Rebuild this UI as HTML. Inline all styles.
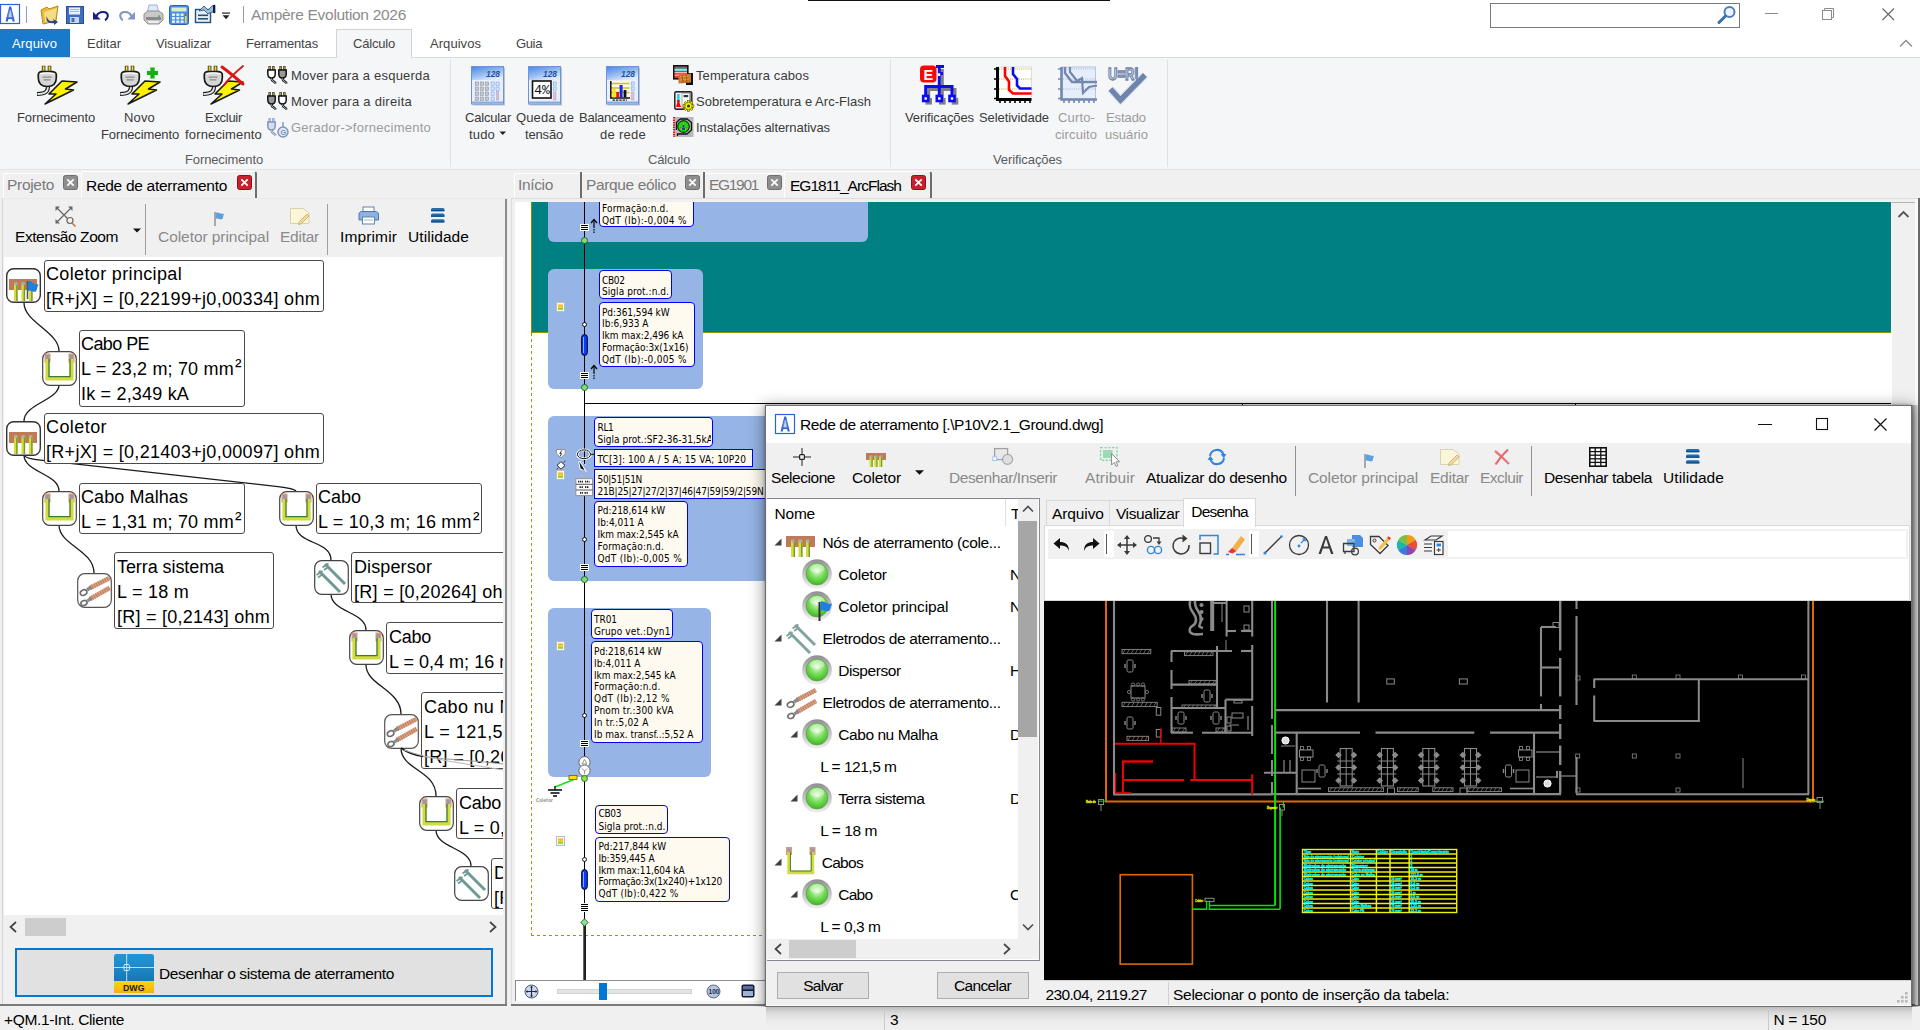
<!DOCTYPE html>
<html lang="pt"><head><meta charset="utf-8"><title>Ampère Evolution 2026</title>
<style>
html,body{margin:0;padding:0;}
body{width:1920px;height:1030px;overflow:hidden;position:relative;background:#f0f0f0;font-family:"Liberation Sans",sans-serif;color:#000;}
div,span.t,svg{position:absolute;box-sizing:border-box;}
span.t{white-space:pre;line-height:1;}
svg{overflow:visible;}
</style></head><body>
<div style="left:0px;top:0px;width:1920px;height:29px;background:#fff;"></div>
<div style="left:808px;top:0px;width:302px;height:1px;background:#111;"></div>
<svg style="left:0px;top:4px;" width="20" height="20" viewBox="0 0 20 20"><rect x="0.5" y="0.5" width="19" height="19" fill="#fff" stroke="#2a62d9" stroke-width="1.2"/><path d="M9.3 2.5 H11.1 L14.8 17.5 H12.6 L10.2 5.5 L7.8 17.5 H5.6Z" fill="#2f63d6"/><path d="M9 6 L7.2 15 H13.2 L11.4 6" fill="#8fb0ee" opacity="0.55"/><path d="M6.6 14.2 H13.8" stroke="#2f63d6" stroke-width="1.7"/></svg>
<div style="left:26px;top:6px;width:1px;height:17px;background:#9a9a9a;"></div>
<svg style="left:38px;top:4px;" width="23" height="21" viewBox="0 0 23 21"><path d="M3 6 L9 3 L11 5 L20 2 L18 17 L5 20 Z" fill="#e9b93b" stroke="#b98a1c" stroke-width="1"/><path d="M6 8 L19 4 L17 16 L7 18Z" fill="#f7dc84"/><path d="M9 12 c0 4 3 6 7 5 l-1 -2 5 3 -4 3 0 -2 c-5 1 -9 -2 -7 -7z" fill="#1c3f94"/></svg>
<svg style="left:66px;top:6px;" width="19" height="18" viewBox="0 0 19 18"><rect x="0.5" y="0.5" width="17" height="17" fill="#3c6fc0" stroke="#2a4f94"/><rect x="3" y="1.5" width="11" height="7" fill="#e8f0fb"/><rect x="4" y="3" width="9" height="1" fill="#9db7df"/><rect x="4" y="5" width="9" height="1" fill="#9db7df"/><rect x="4" y="11" width="9" height="6" fill="#c9d6ea"/><rect x="5.5" y="12" width="3" height="4" fill="#3c6fc0"/></svg>
<svg style="left:92px;top:10px;" width="18" height="12" viewBox="0 0 18 12"><path d="M4.5 6 C7 0.5 16.5 0.8 15.8 6.2 C15.6 8 14.6 9.4 13 10.2" fill="none" stroke="#17207e" stroke-width="2.1"/><path d="M1 1.8 V9.4 H8.6Z" fill="#17207e"/></svg>
<svg style="left:118px;top:10px;" width="18" height="12" viewBox="0 0 18 12"><path d="M13.5 6 C11 0.5 1.5 0.8 2.2 6.2 C2.4 8 3.4 9.4 5 10.2" fill="none" stroke="#7f97c6" stroke-width="2.1"/><path d="M17 1.8 V9.4 H9.4Z" fill="#7f97c6"/></svg>
<svg style="left:143px;top:4px;" width="21" height="21" viewBox="0 0 21 21"><path d="M6 1 H14 L16 9 H4Z" fill="#dfe9f7" stroke="#9fb4d3"/><path d="M1 10 L5 7 H16 L20 10 V16 L16 20 H5 L1 16Z" fill="#c9c9c9" stroke="#8f8f8f"/><path d="M3 13 H18 V16 H3Z" fill="#8a8a8a"/><path d="M5 17 H16 L15 19 H6Z" fill="#eee"/><rect x="15" y="11.5" width="2" height="1.2" fill="#3ba43b"/></svg>
<svg style="left:169px;top:5px;" width="21" height="20" viewBox="0 0 21 20"><rect x="0.5" y="0.5" width="19" height="19" rx="2" fill="#4a8ee0" stroke="#2a62b8"/><rect x="2.5" y="2.5" width="15" height="4" fill="#d9f0c0"/><g fill="#e8f1fc"><rect x="3" y="8.5" width="3" height="2.4"/><rect x="7.3" y="8.5" width="3" height="2.4"/><rect x="11.6" y="8.5" width="3" height="2.4"/><rect x="3" y="12" width="3" height="2.4"/><rect x="7.3" y="12" width="3" height="2.4"/><rect x="11.6" y="12" width="3" height="2.4"/><rect x="3" y="15.5" width="3" height="2.4"/><rect x="7.3" y="15.5" width="3" height="2.4"/><rect x="11.6" y="15.5" width="3" height="2.4"/></g><rect x="16" y="9" width="1.6" height="9" fill="#f3d94a"/><rect x="16" y="9" width="1.6" height="2" fill="#e03a3a"/></svg>
<svg style="left:195px;top:5px;" width="21" height="19" viewBox="0 0 21 19"><rect x="0.5" y="4.5" width="15" height="13" fill="#e8eef6" stroke="#23507e" stroke-width="1.4"/><rect x="3" y="9.5" width="10" height="1.6" fill="#23507e"/><rect x="3" y="13" width="10" height="1.6" fill="#23507e"/><path d="M4 6 L9 1 L13 5 L17 1 L20 0 V8 L17 7 L13 9 L9 5Z" fill="#9db9d9" stroke="#23507e" stroke-width="0.8"/><rect x="18" y="0" width="2" height="8" fill="#0b1c4a"/></svg>
<svg style="left:222px;top:12px;" width="9" height="8" viewBox="0 0 9 8"><rect x="0" y="0.5" width="8" height="1.2" fill="#222"/><path d="M0.5 3.2 H7.5 L4 7.2Z" fill="#222"/></svg>
<div style="left:243px;top:6px;width:1px;height:17px;background:#9a9a9a;"></div>
<span class="t" style="left:251px;top:6.88px;font-size:15.5px;letter-spacing:-0.291px;color:#8b8b8b;">Ampère Evolution 2026</span>
<div style="left:1490px;top:3px;width:250px;height:25px;background:#fff;border:1px solid #7a7a7a;"></div>
<svg style="left:1716px;top:5px;" width="22" height="20" viewBox="0 0 22 20"><circle cx="13.5" cy="7" r="5" fill="#e9f3fc" stroke="#4a7fb5" stroke-width="2"/><path d="M9.5 11 L3 17.5" stroke="#3b6ea3" stroke-width="3" stroke-linecap="round"/></svg>
<div style="left:1765px;top:13px;width:13px;height:1px;background:#8a8a8a;"></div>
<svg style="left:1822px;top:8px;" width="13" height="13" viewBox="0 0 13 13"><rect x="0.5" y="2.5" width="9" height="9" fill="none" stroke="#8a8a8a"/><path d="M2.5 2.5 V0.5 H11.5 V9.5 H9.5" fill="none" stroke="#8a8a8a"/></svg>
<svg style="left:1882px;top:8px;" width="13" height="13" viewBox="0 0 13 13"><path d="M0.5 0.5 L12 12 M12 0.5 L0.5 12" stroke="#666" stroke-width="1.1" fill="none"/></svg>
<div style="left:0px;top:29px;width:1920px;height:29px;background:#fff;"></div>
<div style="left:0px;top:57px;width:1920px;height:1px;background:#dadbdc;"></div>
<div style="left:0px;top:29px;width:70px;height:28px;background:#1979ca;"></div>
<span class="t" style="left:12px;top:37.00px;font-size:13px;letter-spacing:0.132px;color:#fff;">Arquivo</span>
<span class="t" style="left:87px;top:37.00px;font-size:13px;letter-spacing:0.007px;color:#444;">Editar</span>
<span class="t" style="left:156px;top:37.00px;font-size:13px;letter-spacing:-0.112px;color:#444;">Visualizar</span>
<span class="t" style="left:246px;top:37.00px;font-size:13px;letter-spacing:-0.153px;color:#444;">Ferramentas</span>
<div style="left:336px;top:29px;width:76px;height:30px;background:#f5f6f8;border:1px solid #d2d3d4;border-bottom:none;"></div>
<span class="t" style="left:353px;top:37.00px;font-size:13px;letter-spacing:-0.193px;color:#444;">Cálculo</span>
<span class="t" style="left:430px;top:37.00px;font-size:13px;letter-spacing:0.053px;color:#444;">Arquivos</span>
<span class="t" style="left:516px;top:37.00px;font-size:13px;letter-spacing:-0.365px;color:#444;">Guia</span>
<svg style="left:1899px;top:39px;" width="14" height="9" viewBox="0 0 14 9"><path d="M1 7.5 L7 1.5 L13 7.5" fill="none" stroke="#8a8a8a" stroke-width="1.3"/></svg>
<div style="left:0px;top:58px;width:1920px;height:112px;background:#f5f6f8;"></div>
<div style="left:0px;top:169px;width:1920px;height:1px;background:#e3e4e6;"></div>
<div style="left:450px;top:60px;width:1px;height:107px;background:#e0e1e3;"></div>
<div style="left:890px;top:60px;width:1px;height:107px;background:#e0e1e3;"></div>
<div style="left:1167px;top:60px;width:1px;height:107px;background:#e0e1e3;"></div>
<svg style="left:36px;top:64px;" width="44" height="42" viewBox="0 0 44 42"><path d="M7.6 1.7 V9.5 M13.5 1.7 V9.5" stroke="#3a3300" stroke-width="3.6"/><path d="M7.6 2.2 V9.5 M13.5 2.2 V9.5" stroke="#e8d43a" stroke-width="1.9"/>
<path d="M12 21 C12.5 27 10 30 1 30" fill="none" stroke="#222" stroke-width="4.2"/><path d="M12 21 C12.5 27 10 30 1.5 30" fill="none" stroke="#e4e4e4" stroke-width="1.8"/>
<path d="M2.3 10.5 C2.3 8.5 4 7.6 5.5 7.6 H16 C18.5 7.6 20.3 9 20.3 10.5 V14 C20.3 19.5 17 22.5 11.3 22.5 C5.6 22.5 2.3 19.5 2.3 14Z" fill="#d6d6d6" stroke="#1a1a1a" stroke-width="1.7"/><path d="M4 10 C8 8.6 14 8.6 18.5 10" stroke="#fff" stroke-width="1.2" fill="none"/><path d="M6.5 13.2 H15.5 M7.5 15.8 H14.5" stroke="#8a8a8a" stroke-width="1.3"/>
<path d="M26 17 L41 18 L29.5 25 L37.5 26 L9 40 L20 30 L13 30 Z" fill="#fff200" stroke="#1a1a1a" stroke-width="1.6" stroke-linejoin="round"/></svg>
<svg style="left:118.6px;top:64px;" width="44" height="42" viewBox="0 0 44 42"><path d="M7.6 1.7 V9.5 M13.5 1.7 V9.5" stroke="#3a3300" stroke-width="3.6"/><path d="M7.6 2.2 V9.5 M13.5 2.2 V9.5" stroke="#e8d43a" stroke-width="1.9"/>
<path d="M12 21 C12.5 27 10 30 1 30" fill="none" stroke="#222" stroke-width="4.2"/><path d="M12 21 C12.5 27 10 30 1.5 30" fill="none" stroke="#e4e4e4" stroke-width="1.8"/>
<path d="M2.3 10.5 C2.3 8.5 4 7.6 5.5 7.6 H16 C18.5 7.6 20.3 9 20.3 10.5 V14 C20.3 19.5 17 22.5 11.3 22.5 C5.6 22.5 2.3 19.5 2.3 14Z" fill="#d6d6d6" stroke="#1a1a1a" stroke-width="1.7"/><path d="M4 10 C8 8.6 14 8.6 18.5 10" stroke="#fff" stroke-width="1.2" fill="none"/><path d="M6.5 13.2 H15.5 M7.5 15.8 H14.5" stroke="#8a8a8a" stroke-width="1.3"/>
<path d="M26 17 L41 18 L29.5 25 L37.5 26 L9 40 L20 30 L13 30 Z" fill="#fff200" stroke="#1a1a1a" stroke-width="1.6" stroke-linejoin="round"/><path d="M33.5 2.5 V15.5 M27 9 H40" stroke="#e6f5e6" stroke-width="6.4"/><path d="M33.5 3.5 V14.5 M28 9 H39" stroke="#12b012" stroke-width="4.2"/></svg>
<svg style="left:202.3px;top:64px;" width="44" height="42" viewBox="0 0 44 42"><path d="M7.6 1.7 V9.5 M13.5 1.7 V9.5" stroke="#3a3300" stroke-width="3.6"/><path d="M7.6 2.2 V9.5 M13.5 2.2 V9.5" stroke="#e8d43a" stroke-width="1.9"/>
<path d="M12 21 C12.5 27 10 30 1 30" fill="none" stroke="#222" stroke-width="4.2"/><path d="M12 21 C12.5 27 10 30 1.5 30" fill="none" stroke="#e4e4e4" stroke-width="1.8"/>
<path d="M2.3 10.5 C2.3 8.5 4 7.6 5.5 7.6 H16 C18.5 7.6 20.3 9 20.3 10.5 V14 C20.3 19.5 17 22.5 11.3 22.5 C5.6 22.5 2.3 19.5 2.3 14Z" fill="#d6d6d6" stroke="#1a1a1a" stroke-width="1.7"/><path d="M4 10 C8 8.6 14 8.6 18.5 10" stroke="#fff" stroke-width="1.2" fill="none"/><path d="M6.5 13.2 H15.5 M7.5 15.8 H14.5" stroke="#8a8a8a" stroke-width="1.3"/>
<path d="M26 17 L41 18 L29.5 25 L37.5 26 L9 40 L20 30 L13 30 Z" fill="#fff200" stroke="#1a1a1a" stroke-width="1.6" stroke-linejoin="round"/><path d="M20 3 C27 8 34 14 41 20" stroke="#e01212" stroke-width="3" stroke-linecap="round" fill="none"/><path d="M41 2 C34 8 27 14 22 21" stroke="#d61a1a" stroke-width="1.8" stroke-linecap="round" fill="none"/></svg>
<span class="t" style="left:17px;top:111.00px;font-size:13px;letter-spacing:-0.123px;color:#3a3a3a;">Fornecimento</span>
<span class="t" style="left:124px;top:111.00px;font-size:13px;letter-spacing:0.163px;color:#3a3a3a;">Novo</span>
<span class="t" style="left:101px;top:128.00px;font-size:13px;letter-spacing:-0.123px;color:#3a3a3a;">Fornecimento</span>
<span class="t" style="left:205px;top:111.00px;font-size:13px;letter-spacing:-0.287px;color:#3a3a3a;">Excluir</span>
<span class="t" style="left:185px;top:128.00px;font-size:13px;letter-spacing:0.155px;color:#3a3a3a;">fornecimento</span>
<span class="t" style="left:185px;top:153.00px;font-size:13px;letter-spacing:-0.123px;color:#5a5a5a;">Fornecimento</span>
<svg style="left:267px;top:65px;" width="22" height="20" viewBox="0 0 22 20"><path d="M2.6 1 V5 M6.4 1 V5" stroke="#111" stroke-width="2.2"/><path d="M2.6 1.4 V4.5 M6.4 1.4 V4.5" stroke="#d8c21a" stroke-width="0.9"/><path d="M0.8 5 H8.2 V9 C8.2 12 6.5 13 4.5 13 C2.5 13 0.8 12 0.8 9Z" fill="#fff" stroke="#111" stroke-width="1.5"/><path d="M4.5 13 C4.5 17 8 16 8.5 18.5" stroke="#111" stroke-width="2.4" fill="none"/><path d="M4.5 13.5 C4.5 16.6 7.6 16 8.2 18" stroke="#ddd" stroke-width="0.8" fill="none"/><path d="M13.6 1 V5 M17.4 1 V5" stroke="#111" stroke-width="2.2"/><path d="M13.6 1.4 V4.5 M17.4 1.4 V4.5" stroke="#d8c21a" stroke-width="0.9"/><path d="M11.8 5 H19.2 V9 C19.2 12 17.5 13 15.5 13 C13.5 13 11.8 12 11.8 9Z" fill="#9a9a9a" stroke="#111" stroke-width="1.5"/><path d="M15.5 13 C15.5 17 19 16 19.5 18.5" stroke="#111" stroke-width="2.4" fill="none"/><path d="M15.5 13.5 C15.5 16.6 18.6 16 19.2 18" stroke="#ddd" stroke-width="0.8" fill="none"/></svg>
<svg style="left:267px;top:91px;" width="22" height="20" viewBox="0 0 22 20"><path d="M2.6 1 V5 M6.4 1 V5" stroke="#111" stroke-width="2.2"/><path d="M2.6 1.4 V4.5 M6.4 1.4 V4.5" stroke="#d8c21a" stroke-width="0.9"/><path d="M0.8 5 H8.2 V9 C8.2 12 6.5 13 4.5 13 C2.5 13 0.8 12 0.8 9Z" fill="#9a9a9a" stroke="#111" stroke-width="1.5"/><path d="M4.5 13 C4.5 17 8 16 8.5 18.5" stroke="#111" stroke-width="2.4" fill="none"/><path d="M4.5 13.5 C4.5 16.6 7.6 16 8.2 18" stroke="#ddd" stroke-width="0.8" fill="none"/><path d="M13.6 1 V5 M17.4 1 V5" stroke="#111" stroke-width="2.2"/><path d="M13.6 1.4 V4.5 M17.4 1.4 V4.5" stroke="#d8c21a" stroke-width="0.9"/><path d="M11.8 5 H19.2 V9 C19.2 12 17.5 13 15.5 13 C13.5 13 11.8 12 11.8 9Z" fill="#fff" stroke="#111" stroke-width="1.5"/><path d="M15.5 13 C15.5 17 19 16 19.5 18.5" stroke="#111" stroke-width="2.4" fill="none"/><path d="M15.5 13.5 C15.5 16.6 18.6 16 19.2 18" stroke="#ddd" stroke-width="0.8" fill="none"/></svg>
<svg style="left:267px;top:117px;" width="22" height="22" viewBox="0 0 22 22"><path d="M2.6 1 V5 M6.4 1 V5" stroke="#8397bd" stroke-width="2.2"/><path d="M2.6 1.4 V4.5 M6.4 1.4 V4.5" stroke="#c0cbe3" stroke-width="0.9"/><path d="M0.8 5 H8.2 V9 C8.2 12 6.5 13 4.5 13 C2.5 13 0.8 12 0.8 9Z" fill="#d5def0" stroke="#8397bd" stroke-width="1.5"/><path d="M4.5 13 C4.5 17 8 16 8.5 18.5" stroke="#8397bd" stroke-width="2.4" fill="none"/><path d="M4.5 13.5 C4.5 16.6 7.6 16 8.2 18" stroke="#ddd" stroke-width="0.8" fill="none"/><circle cx="16" cy="15" r="5" fill="#dfe7f5" stroke="#7d93ba" stroke-width="1.4"/><path d="M16 5 V10" stroke="#7d93ba" stroke-width="1.4"/><text x="13.4" y="18" font-size="7.5" font-weight="bold" fill="#7d93ba" font-family="Liberation Sans,sans-serif">G</text></svg>
<span class="t" style="left:291px;top:69.00px;font-size:13px;letter-spacing:0.219px;color:#3a3a3a;">Mover para a esquerda</span>
<span class="t" style="left:291px;top:95.00px;font-size:13px;letter-spacing:0.270px;color:#3a3a3a;">Mover para a direita</span>
<span class="t" style="left:291px;top:121.00px;font-size:13px;letter-spacing:0.250px;color:#9b9b9b;">Gerador-&gt;fornecimento</span>
<svg style="left:471px;top:66px;" width="35" height="40" viewBox="0 0 35 40"><defs><linearGradient id="cg471" x1="0" y1="0" x2="0.6" y2="1"><stop offset="0" stop-color="#4a8ae6"/><stop offset="0.6" stop-color="#9dc0f2"/><stop offset="1" stop-color="#dfeafb"/></linearGradient></defs><rect x="1.5" y="1.5" width="32.5" height="38" fill="#b9c3d3"/><rect x="0.5" y="0.5" width="32" height="37.5" fill="#e9f0fc" stroke="#6f93d6"/><rect x="1" y="1" width="31" height="13" fill="url(#cg471)"/><text x="15" y="11" font-size="9" font-style="italic" font-weight="bold" fill="#1f4fa8" font-family="Liberation Sans,sans-serif" textLength="14" lengthAdjust="spacingAndGlyphs">128</text><rect x="4.2" y="16" width="3.4" height="3.4" fill="#c4c8d0" stroke="#8e949e" stroke-width="0.6"/><rect x="9.2" y="16" width="3.4" height="3.4" fill="#c4c8d0" stroke="#8e949e" stroke-width="0.6"/><rect x="14.2" y="16" width="3.4" height="3.4" fill="#c4c8d0" stroke="#8e949e" stroke-width="0.6"/><rect x="4.2" y="21" width="3.4" height="3.4" fill="#c4c8d0" stroke="#8e949e" stroke-width="0.6"/><rect x="9.2" y="21" width="3.4" height="3.4" fill="#c4c8d0" stroke="#8e949e" stroke-width="0.6"/><rect x="14.2" y="21" width="3.4" height="3.4" fill="#c4c8d0" stroke="#8e949e" stroke-width="0.6"/><rect x="4.2" y="26" width="3.4" height="3.4" fill="#c4c8d0" stroke="#8e949e" stroke-width="0.6"/><rect x="9.2" y="26" width="3.4" height="3.4" fill="#c4c8d0" stroke="#8e949e" stroke-width="0.6"/><rect x="14.2" y="26" width="3.4" height="3.4" fill="#c4c8d0" stroke="#8e949e" stroke-width="0.6"/><rect x="4.2" y="31" width="3.4" height="3.4" fill="#c4c8d0" stroke="#8e949e" stroke-width="0.6"/><rect x="9.2" y="31" width="3.4" height="3.4" fill="#c4c8d0" stroke="#8e949e" stroke-width="0.6"/><rect x="14.2" y="31" width="3.4" height="3.4" fill="#c4c8d0" stroke="#8e949e" stroke-width="0.6"/><rect x="20" y="16" width="3.2" height="3.4" fill="#d2e3fb" stroke="#7fa9ea" stroke-width="0.6"/><rect x="25" y="16" width="3.2" height="3.4" fill="#d2e3fb" stroke="#7fa9ea" stroke-width="0.6"/><rect x="20" y="21" width="3.2" height="3.4" fill="#d2e3fb" stroke="#7fa9ea" stroke-width="0.6"/><rect x="25" y="21" width="3.2" height="3.4" fill="#d2e3fb" stroke="#7fa9ea" stroke-width="0.6"/><rect x="20" y="26" width="3.2" height="3.4" fill="#d2e3fb" stroke="#7fa9ea" stroke-width="0.6"/><rect x="20" y="31" width="3.2" height="3.4" fill="#d2e3fb" stroke="#7fa9ea" stroke-width="0.6"/><rect x="25.4" y="25.5" width="2.4" height="8.6" fill="#f2b9c0" stroke="#8fa9dc" stroke-width="0.5"/><rect x="1" y="35.5" width="31" height="2" fill="#86a8e6"/></svg>
<svg style="left:528px;top:66px;" width="35" height="40" viewBox="0 0 35 40"><defs><linearGradient id="cg528" x1="0" y1="0" x2="0.6" y2="1"><stop offset="0" stop-color="#4a8ae6"/><stop offset="0.6" stop-color="#9dc0f2"/><stop offset="1" stop-color="#dfeafb"/></linearGradient></defs><rect x="1.5" y="1.5" width="32.5" height="38" fill="#b9c3d3"/><rect x="0.5" y="0.5" width="32" height="37.5" fill="#e9f0fc" stroke="#6f93d6"/><rect x="1" y="1" width="31" height="13" fill="url(#cg528)"/><text x="15" y="11" font-size="9" font-style="italic" font-weight="bold" fill="#1f4fa8" font-family="Liberation Sans,sans-serif" textLength="14" lengthAdjust="spacingAndGlyphs">128</text><rect x="4.5" y="15" width="18.5" height="17" fill="#fff" stroke="#111" stroke-width="1.6"/><text x="6.2" y="28.4" font-size="12" fill="#111" font-family="Liberation Mono,monospace" textLength="15.5" lengthAdjust="spacingAndGlyphs">4%</text><rect x="25.6" y="16" width="2.6" height="3.2" fill="#d2e3fb" stroke="#7fa9ea" stroke-width="0.6"/><rect x="25.6" y="21" width="2.6" height="3.2" fill="#d2e3fb" stroke="#7fa9ea" stroke-width="0.6"/><rect x="25.6" y="26" width="2.4" height="8" fill="#f2b9c0" stroke="#8fa9dc" stroke-width="0.5"/><rect x="1" y="35.5" width="31" height="2" fill="#86a8e6"/></svg>
<svg style="left:606px;top:66px;" width="35" height="40" viewBox="0 0 35 40"><defs><linearGradient id="cg606" x1="0" y1="0" x2="0.6" y2="1"><stop offset="0" stop-color="#4a8ae6"/><stop offset="0.6" stop-color="#9dc0f2"/><stop offset="1" stop-color="#dfeafb"/></linearGradient></defs><rect x="1.5" y="1.5" width="32.5" height="38" fill="#b9c3d3"/><rect x="0.5" y="0.5" width="32" height="37.5" fill="#e9f0fc" stroke="#6f93d6"/><rect x="1" y="1" width="31" height="13" fill="url(#cg606)"/><text x="15" y="11" font-size="9" font-style="italic" font-weight="bold" fill="#1f4fa8" font-family="Liberation Sans,sans-serif" textLength="14" lengthAdjust="spacingAndGlyphs">128</text><rect x="4" y="15" width="19.5" height="17" fill="#fffbe0"/><path d="M4 17.5 H23.5 M4 22 H23.5 M4 26.5 H23.5" stroke="#c9c030" stroke-width="1.3"/><path d="M4.8 15 V32 H24" stroke="#111" stroke-width="1.5" fill="none"/><rect x="6.4" y="23" width="3.2" height="8.4" fill="#f0e800"/><rect x="10.2" y="26" width="2.8" height="5.4" fill="#e11"/><rect x="13.6" y="19" width="3" height="12.4" fill="#1428e8"/><rect x="17.6" y="24" width="2.8" height="7.4" fill="#111"/><path d="M6.5 34.2 H21" stroke="#222" stroke-width="1.2" stroke-dasharray="2.4 1"/><rect x="25.6" y="16" width="2.6" height="3.2" fill="#d2e3fb" stroke="#7fa9ea" stroke-width="0.6"/><rect x="25.6" y="21" width="2.6" height="3.2" fill="#d2e3fb" stroke="#7fa9ea" stroke-width="0.6"/><rect x="25.6" y="26" width="2.4" height="8" fill="#f2b9c0" stroke="#8fa9dc" stroke-width="0.5"/><rect x="1" y="35.5" width="31" height="2" fill="#86a8e6"/></svg>
<span class="t" style="left:465px;top:111.00px;font-size:13px;letter-spacing:-0.210px;color:#3a3a3a;">Calcular</span>
<span class="t" style="left:469px;top:128.00px;font-size:13px;letter-spacing:0.175px;color:#3a3a3a;">tudo</span>
<svg style="left:499px;top:131px;" width="8" height="5" viewBox="0 0 8 5"><path d="M0.5 0.5 H7 L3.75 4Z" fill="#222"/></svg>
<span class="t" style="left:516px;top:111.00px;font-size:13px;letter-spacing:0.113px;color:#3a3a3a;">Queda de</span>
<span class="t" style="left:525px;top:128.00px;font-size:13px;letter-spacing:-0.171px;color:#3a3a3a;">tensão</span>
<span class="t" style="left:579px;top:111.00px;font-size:13px;letter-spacing:-0.256px;color:#3a3a3a;">Balanceamento</span>
<span class="t" style="left:600px;top:128.00px;font-size:13px;letter-spacing:0.273px;color:#3a3a3a;">de rede</span>
<span class="t" style="left:648px;top:153.00px;font-size:13px;letter-spacing:-0.193px;color:#5a5a5a;">Cálculo</span>
<svg style="left:673px;top:65px;" width="21" height="21" viewBox="0 0 21 21"><rect x="13" y="8" width="7" height="12" fill="#111"/><rect x="0.8" y="0.8" width="14" height="13" fill="#e33" stroke="#111" stroke-width="1.6"/><rect x="1.6" y="1.8" width="12.4" height="2" fill="#2a8a8a"/><rect x="1.6" y="3.8" width="12.4" height="2" fill="#6ff"/><rect x="1.6" y="7" width="12.4" height="1.2" fill="#fbb"/><rect x="1.6" y="9.6" width="12.4" height="1.2" fill="#fbb"/><path d="M5.5 10 L18 8.5 L18 17.5 L5.5 18.5Z" fill="#c8782a"/><path d="M7 12 L16 11 M7 15 L16 14" stroke="#e0a04a" stroke-width="1.2"/><path d="M9 10 L10 18 M13 9.5 L14 18" stroke="#a4521a" stroke-width="0.9"/></svg>
<svg style="left:674px;top:91px;" width="21" height="21" viewBox="0 0 21 21"><rect x="0.8" y="0.8" width="17" height="17.4" rx="1.5" fill="#bdbdbd" stroke="#222" stroke-width="1.5"/><rect x="1.8" y="2" width="5.6" height="15" fill="#f4f4f4"/><rect x="3.2" y="3" width="2.4" height="8" fill="#1fd0d8"/><path d="M3.2 9 H5.6 V12 L7 16 H2 L3.2 12Z" fill="#f00"/><rect x="8.6" y="3" width="6.6" height="10" fill="#fff"/><rect x="9.6" y="4" width="4.6" height="2.2" fill="#333"/><rect x="15.6" y="2" width="1.6" height="12" fill="#8a8a8a"/><rect x="-1.2" y="-5.4" width="2.4" height="10.8" fill="#f4f000" stroke="#3a3a00" stroke-width="0.5" transform="translate(14.5 15) rotate(0)"/><rect x="-1.2" y="-5.4" width="2.4" height="10.8" fill="#f4f000" stroke="#3a3a00" stroke-width="0.5" transform="translate(14.5 15) rotate(45)"/><rect x="-1.2" y="-5.4" width="2.4" height="10.8" fill="#f4f000" stroke="#3a3a00" stroke-width="0.5" transform="translate(14.5 15) rotate(90)"/><rect x="-1.2" y="-5.4" width="2.4" height="10.8" fill="#f4f000" stroke="#3a3a00" stroke-width="0.5" transform="translate(14.5 15) rotate(135)"/><circle cx="14.5" cy="15" r="3.7" fill="#f4f000" stroke="#3a3a00" stroke-width="0.5"/><circle cx="14.5" cy="15" r="1.5" fill="#333"/></svg>
<svg style="left:673px;top:117px;" width="21" height="21" viewBox="0 0 21 21"><rect x="1.5" y="0" width="19" height="20" fill="#b9b9b9"/><path d="M1 0 V20" stroke="#e01212" stroke-width="2" stroke-dasharray="1.6 0.8"/><path d="M7 2 H14 L18.5 5.5 V13 L14 17 H4.5 V19" fill="none" stroke="#111" stroke-width="1.3"/><path d="M7 2 L3.5 5.5 V13" fill="none" stroke="#111" stroke-width="1.3"/><circle cx="10.5" cy="9.5" r="5.8" fill="#0ee00e" stroke="#0a3a0a" stroke-width="1.2"/><path d="M10.5 6 V10.5 M8 12 H13 M8 10.5 V13 M13 10.5 V13" stroke="#1a1a9a" stroke-width="1.5" fill="none"/><rect x="9.6" y="5.6" width="1.8" height="2.4" fill="#c8a030"/><rect x="7.2" y="10.6" width="1.8" height="2.4" fill="#c8a030"/><rect x="12" y="10.6" width="1.8" height="2.4" fill="#c8a030"/></svg>
<span class="t" style="left:696px;top:69.00px;font-size:13px;letter-spacing:0.102px;color:#3a3a3a;">Temperatura cabos</span>
<span class="t" style="left:696px;top:95.00px;font-size:13px;letter-spacing:0.031px;color:#3a3a3a;">Sobretemperatura e Arc-Flash</span>
<span class="t" style="left:696px;top:121.00px;font-size:13px;letter-spacing:-0.077px;color:#3a3a3a;">Instalações alternativas</span>
<svg style="left:920px;top:65px;" width="40" height="42" viewBox="0 0 40 42"><g transform="translate(3,3)"><path d="M19.3 1 V33 M5.7 33 V21.4 H32 V33" stroke="#808080" stroke-width="3" fill="none"/><rect x="2.4" y="30" width="6.6" height="6.6" fill="#808080"/><rect x="16" y="30" width="6.6" height="6.6" fill="#808080"/><rect x="28.7" y="30" width="6.6" height="6.6" fill="#808080"/></g><path d="M19.3 1 V33 M5.7 33 V21.4 H32 V33" stroke="#0a0af5" stroke-width="3" fill="none"/><path d="M16 1.5 H24 M19 8.5 H23" stroke="#0a0af5" stroke-width="3"/><g fill="#fff" stroke="#0a0af5" stroke-width="2.6"><rect x="3.2" y="31" width="5" height="5"/><rect x="16.8" y="31" width="5" height="5"/><rect x="29.5" y="31" width="5" height="5"/></g><rect x="0" y="0.5" width="16.5" height="17" rx="4" fill="#f50a0a"/><text x="3.6" y="14.5" font-size="14.5" font-weight="bold" fill="#fff" font-family="Liberation Sans,sans-serif">E</text><rect x="17.6" y="8.3" width="2.6" height="2.6" fill="#fff"/></svg>
<svg style="left:993px;top:66px;" width="40" height="40" viewBox="0 0 40 40"><rect x="5" y="1" width="33.5" height="32" fill="#fff" stroke="#c8c8c8" stroke-width="0.6"/><path d="M6 3 H38 M6 13 H38 M6 23 H38" stroke="#b5b000" stroke-width="1" stroke-dasharray="1 1.2"/><path d="M4.5 1 V33.5 H38.5" stroke="#000" stroke-width="3" fill="none"/><path d="M1 3 H4 M1 13 H4 M1 23 H4 M1 32.5 H4 M7 34 V37 M12 34 V37 M17 34 V37 M22 34 V37 M27 34 V37 M32 34 V37 M37 34 V37" stroke="#000" stroke-width="1.6"/><path d="M12 1 V10 L16 15.5 V24 L20 27.5 H38.5" stroke="#f00" stroke-width="2.6" fill="none"/><path d="M20 1 V8 L24 13 V19.5 L27 22.5 H38.5" stroke="#0a0af5" stroke-width="2.6" fill="none"/></svg>
<svg style="left:1057px;top:66px;" width="42" height="40" viewBox="0 0 42 40"><rect x="5" y="1" width="33.5" height="32" fill="#e6eefb" stroke="#a9b9d6" stroke-width="0.8"/><path d="M6 3 H38 M6 13 H38 M6 23 H38" stroke="#a9b9d6" stroke-width="1" stroke-dasharray="1 1.2"/><path d="M4.5 1 V33.5 H40" stroke="#7388b0" stroke-width="2.6" fill="none"/><path d="M1 3 H4 M1 13 H4 M1 23 H4 M1 32.5 H4 M7 34 V37 M12 34 V37 M17 34 V37 M22 34 V37 M27 34 V37 M32 34 V37 M37 34 V37" stroke="#7388b0" stroke-width="1.6"/><path d="M8 1 V7 L15 16 H40" stroke="#7388b0" stroke-width="2.4" fill="none"/><path d="M13 1 V6 L17 11 L20 15 L25 12 L26 27 L32 21 L40 19.5" stroke="#7388b0" stroke-width="2.2" fill="none"/></svg>
<svg style="left:1107px;top:64px;" width="42" height="42" viewBox="0 0 42 42"><text x="1" y="15.5" font-size="16" font-weight="bold" fill="#e6eefb" stroke="#6f84aa" stroke-width="1.3" font-family="Liberation Sans,sans-serif" textLength="30" lengthAdjust="spacingAndGlyphs">U=RI</text><path d="M3.5 25 L13.5 36 L38 11" stroke="#dfe7f5" stroke-width="8" fill="none"/><path d="M3.5 25 L13.5 36 L38 11" stroke="#6f84aa" stroke-width="5.4" fill="none"/><path d="M30 3 V17" stroke="#6f84aa" stroke-width="1.6"/></svg>
<span class="t" style="left:905px;top:111.00px;font-size:13px;letter-spacing:-0.091px;color:#3a3a3a;">Verificações</span>
<span class="t" style="left:979px;top:111.00px;font-size:13px;letter-spacing:-0.069px;color:#3a3a3a;">Seletividade</span>
<span class="t" style="left:1058px;top:111.00px;font-size:13px;letter-spacing:0.147px;color:#9b9b9b;">Curto-</span>
<span class="t" style="left:1055px;top:128.00px;font-size:13px;letter-spacing:0.103px;color:#9b9b9b;">circuito</span>
<span class="t" style="left:1106px;top:111.00px;font-size:13px;letter-spacing:-0.078px;color:#9b9b9b;">Estado</span>
<span class="t" style="left:1105px;top:128.00px;font-size:13px;letter-spacing:0.052px;color:#9b9b9b;">usuário</span>
<span class="t" style="left:993px;top:153.00px;font-size:13px;letter-spacing:-0.091px;color:#5a5a5a;">Verificações</span>
<div style="left:0px;top:170px;width:1920px;height:29px;background:#f0f0f0;"></div>
<div style="left:3px;top:173px;width:78px;height:26px;background:#f0f0f0;border-left:1px solid #fff;border-top:1px solid #fff;border-radius:3px 0 0 0;"></div>
<span class="t" style="left:7px;top:176.88px;font-size:15.5px;letter-spacing:-0.301px;color:#7a7a7a;">Projeto</span>
<svg style="left:63px;top:175px;" width="15" height="15" viewBox="0 0 15 15"><rect x="0.5" y="0.5" width="14" height="14" rx="2" fill="#8e8e8e" stroke="#6e6e6e"/><path d="M4.3 4.3 L10.7 10.7 M10.7 4.3 L4.3 10.7" stroke="#fff" stroke-width="1.7"/></svg>
<div style="left:81px;top:171px;width:176px;height:28px;background:#f0f0f0;border-left:1px solid #fff;border-top:1px solid #fff;border-radius:3px 3px 0 0;border-right:2px solid #6d6d6d;"></div>
<span class="t" style="left:86px;top:177.88px;font-size:15.5px;letter-spacing:-0.288px;color:#000;">Rede de aterramento</span>
<svg style="left:237px;top:175px;" width="15" height="15" viewBox="0 0 15 15"><rect x="0.5" y="0.5" width="14" height="14" rx="2" fill="#c8202c" stroke="#8f1018"/><path d="M4.3 4.3 L10.7 10.7 M10.7 4.3 L4.3 10.7" stroke="#fff" stroke-width="1.7"/></svg>
<div style="left:2px;top:198px;width:506px;height:808px;background:#f0f0f0;border-left:1px solid #d5d5d5;border-top:1px solid #e8e8e8;"></div>
<div style="left:505px;top:199px;width:2px;height:807px;background:#8c8c8c;"></div>
<div style="left:0px;top:1004px;width:507px;height:2px;background:#7a7a7a;"></div>
<svg style="left:54px;top:205px;" width="24" height="24" viewBox="0 0 24 24"><path d="M3 3 L17 17 M17 3 L3 17" stroke="#666" stroke-width="1.3"/><path d="M1.5 1.5 H6 L1.5 6Z M18.5 1.5 H14 L18.5 6Z M1.5 18.5 H6 L1.5 14Z" fill="#666"/><circle cx="16" cy="15.5" r="3" fill="#f0f0f0" stroke="#666" stroke-width="1.2"/><path d="M18 18 L21.5 21.5" stroke="#c27a3a" stroke-width="1.6"/></svg>
<span class="t" style="left:15px;top:228.88px;font-size:15.5px;letter-spacing:-0.427px;color:#000;">Extensão Zoom</span>
<svg style="left:133px;top:228px;" width="8" height="5" viewBox="0 0 8 5"><path d="M0 0.5 H8 L4 4.5Z" fill="#111"/></svg>
<div style="left:145px;top:204px;width:1px;height:51px;background:#9f9f9f;"></div>
<svg style="left:213px;top:211px;" width="12" height="16" viewBox="0 0 12 16"><path d="M2 1 V15" stroke="#8a8a8a" stroke-width="1.4"/><path d="M2.5 2 C6 0.5 8 4 11 2.5 L9.5 8 C7 9.5 5 6.5 2.5 8Z" fill="#5fa0dd"/></svg>
<span class="t" style="left:158px;top:228.88px;font-size:15.5px;letter-spacing:-0.058px;color:#8a8a8a;">Coletor principal</span>
<svg style="left:289px;top:207px;" width="22" height="19" viewBox="0 0 22 19"><path d="M1.5 1.5 H14 L20 6 V16.5 H1.5Z" fill="#fbf6d8" stroke="#d9d2b0"/><path d="M10 15 L18 7 L20 9 L12 17 L9.5 17.5Z" fill="#f2d9a0" stroke="#c9a868" stroke-width="0.8"/></svg>
<span class="t" style="left:280px;top:228.88px;font-size:15.5px;letter-spacing:-0.248px;color:#8a8a8a;">Editar</span>
<div style="left:327px;top:204px;width:1px;height:51px;background:#9f9f9f;"></div>
<svg style="left:358px;top:206px;" width="22" height="19" viewBox="0 0 22 19"><rect x="5" y="1" width="11" height="6" fill="#fff" stroke="#5d83b4"/><path d="M1 8 C1 6 3 5.5 4 5.5 H17 C19 5.5 20.5 6.5 20.5 8 V14 H1Z" fill="#8fb3e0" stroke="#4f78ad"/><rect x="4.5" y="11" width="12" height="7" fill="#fff" stroke="#5d83b4"/><path d="M6 14 H15" stroke="#9db8da"/></svg>
<span class="t" style="left:340px;top:228.88px;font-size:15.5px;letter-spacing:0.130px;color:#000;">Imprimir</span>
<svg style="left:430px;top:207px;" width="16" height="17" viewBox="0 0 16 17"><rect x="1" y="1" width="13.5" height="3.2" rx="1.5" fill="#1f6fb2"/><rect x="1" y="6.6" width="13.5" height="3.2" rx="1.5" fill="#1f6fb2"/><rect x="1" y="12.2" width="13.5" height="3.2" rx="1.5" fill="#1f6fb2"/><rect x="1" y="3" width="13.5" height="1.2" fill="#134a7c"/><rect x="1" y="8.6" width="13.5" height="1.2" fill="#134a7c"/><rect x="1" y="14.2" width="13.5" height="1.2" fill="#134a7c"/></svg>
<span class="t" style="left:408px;top:228.88px;font-size:15.5px;letter-spacing:0.077px;color:#000;">Utilidade</span>
<div style="left:4px;top:257px;width:499px;height:658px;overflow:hidden;background:#fff;">
<svg style="left:0px;top:0px;" width="499" height="658" viewBox="4 257 499 658"><g fill="none" stroke="#1a1a1a" stroke-width="1.3">
<path d="M24 303 C24 322 59 332 59 351"/>
<path d="M59 385 C59 400 24 404 24 421"/>
<path d="M24 455 C24 472 59 474 59 491"/>
<path d="M24 455 C26 459 36 459.6 50 461.2 L278 486.6 C289 487.8 294 488.6 296 491"/>
<path d="M59 525 C59 545 94 550 94 573"/>
<path d="M296 525 C296 545 331 540 331 560"/>
<path d="M331 594 C331 612 366 612 366 630"/>
<path d="M366 665 C366 685 401 690 401 714"/>
<path d="M401 748 C401 770 436 770 436 796"/>
<path d="M436 830 C436 848 471 848 471 866"/>
</g></svg>
<svg style="left:2px;top:11px;" width="35" height="35" viewBox="0 0 35 35"><rect x="0.7" y="0.7" width="33.6" height="33.6" rx="7" fill="#fff" stroke="#333" stroke-width="1.4"/><rect x="3" y="11" width="28" height="11" fill="#c07a58"/><rect x="8" y="15" width="3.6" height="18" fill="#d6dc3c"/><rect x="10.2" y="15" width="1.4" height="18" fill="#6f9a30"/><rect x="8.3" y="14" width="3" height="3" fill="#aab"/><rect x="15.5" y="15" width="3.6" height="18" fill="#d6dc3c"/><rect x="17.7" y="15" width="1.4" height="18" fill="#6f9a30"/><rect x="15.8" y="14" width="3" height="3" fill="#aab"/><rect x="23" y="15" width="3.6" height="18" fill="#d6dc3c"/><rect x="25.2" y="15" width="1.4" height="18" fill="#6f9a30"/><rect x="23.3" y="14" width="3" height="3" fill="#aab"/><path d="M21.5 13 V31" stroke="#555" stroke-width="1.6"/><path d="M22 13 C26 12 28 18 32.5 16 L30 23.5 C27 25 25 21 22 23Z" fill="#1e7fe0"/></svg>
<div style="left:40px;top:3px;width:280px;height:52px;background:#fff;border:1px solid #4a4a4a;border-radius:3px;"></div>
<span class="t" style="left:42px;top:7.76px;font-size:18px;letter-spacing:0.350px;">Coletor principal</span>
<span class="t" style="left:42px;top:32.76px;font-size:18px;letter-spacing:0.301px;">[R+jX] = [0,22199+j0,00334] ohm</span>
<svg style="left:38px;top:94px;" width="35" height="35" viewBox="0 0 35 35"><rect x="0.7" y="0.7" width="33.6" height="33.6" rx="7" fill="#fff" stroke="#444" stroke-width="1.2"/><rect x="2.5" y="2.5" width="6" height="9" fill="#d99a78"/><rect x="26.5" y="2.5" width="6" height="9" fill="#d99a78"/><rect x="4" y="4" width="3.4" height="4" fill="#99a"/><rect x="27.6" y="4" width="3.4" height="4" fill="#99a"/><path d="M5.3 8 V27.5 H29.7 V8" fill="none" stroke="#d3dc3f" stroke-width="3.8"/><path d="M7 8 V25.6 H28 V8" fill="none" stroke="#3f7a34" stroke-width="1.3"/></svg>
<div style="left:75px;top:73px;width:166px;height:77px;background:#fff;border:1px solid #4a4a4a;border-radius:3px;"></div>
<span class="t" style="left:77px;top:77.76px;font-size:18px;letter-spacing:-0.577px;">Cabo PE</span>
<span class="t" style="left:77px;top:102.76px;font-size:18px;letter-spacing:0.171px;">L = 23,2 m; 70 mm</span>
<span class="t" style="left:231px;top:98.89px;font-size:19.5px;">²</span>
<span class="t" style="left:77px;top:127.76px;font-size:18px;letter-spacing:0.188px;">Ik = 2,349 kA</span>
<svg style="left:2px;top:164px;" width="35" height="35" viewBox="0 0 35 35"><rect x="0.7" y="0.7" width="33.6" height="33.6" rx="7" fill="#fff" stroke="#333" stroke-width="1.4"/><rect x="3" y="11" width="28" height="11" fill="#c07a58"/><rect x="8" y="15" width="3.6" height="18" fill="#d6dc3c"/><rect x="10.2" y="15" width="1.4" height="18" fill="#6f9a30"/><rect x="8.3" y="14" width="3" height="3" fill="#aab"/><rect x="15.5" y="15" width="3.6" height="18" fill="#d6dc3c"/><rect x="17.7" y="15" width="1.4" height="18" fill="#6f9a30"/><rect x="15.8" y="14" width="3" height="3" fill="#aab"/><rect x="23" y="15" width="3.6" height="18" fill="#d6dc3c"/><rect x="25.2" y="15" width="1.4" height="18" fill="#6f9a30"/><rect x="23.3" y="14" width="3" height="3" fill="#aab"/></svg>
<div style="left:40px;top:156px;width:280px;height:51px;background:#fff;border:1px solid #4a4a4a;border-radius:3px;"></div>
<span class="t" style="left:42px;top:160.76px;font-size:18px;letter-spacing:0.425px;">Coletor</span>
<span class="t" style="left:42px;top:185.76px;font-size:18px;letter-spacing:0.301px;">[R+jX] = [0,21403+j0,00097] ohm</span>
<svg style="left:38px;top:234px;" width="35" height="35" viewBox="0 0 35 35"><rect x="0.7" y="0.7" width="33.6" height="33.6" rx="7" fill="#fff" stroke="#444" stroke-width="1.2"/><rect x="2.5" y="2.5" width="6" height="9" fill="#d99a78"/><rect x="26.5" y="2.5" width="6" height="9" fill="#d99a78"/><rect x="4" y="4" width="3.4" height="4" fill="#99a"/><rect x="27.6" y="4" width="3.4" height="4" fill="#99a"/><path d="M5.3 8 V27.5 H29.7 V8" fill="none" stroke="#d3dc3f" stroke-width="3.8"/><path d="M7 8 V25.6 H28 V8" fill="none" stroke="#3f7a34" stroke-width="1.3"/></svg>
<div style="left:75px;top:226px;width:166px;height:51px;background:#fff;border:1px solid #4a4a4a;border-radius:3px;"></div>
<span class="t" style="left:77px;top:230.76px;font-size:18px;letter-spacing:0.086px;">Cabo Malhas</span>
<span class="t" style="left:77px;top:255.76px;font-size:18px;letter-spacing:0.171px;">L = 1,31 m; 70 mm</span>
<span class="t" style="left:231px;top:251.89px;font-size:19.5px;">²</span>
<svg style="left:275px;top:234px;" width="35" height="35" viewBox="0 0 35 35"><rect x="0.7" y="0.7" width="33.6" height="33.6" rx="7" fill="#fff" stroke="#444" stroke-width="1.2"/><rect x="2.5" y="2.5" width="6" height="9" fill="#d99a78"/><rect x="26.5" y="2.5" width="6" height="9" fill="#d99a78"/><rect x="4" y="4" width="3.4" height="4" fill="#99a"/><rect x="27.6" y="4" width="3.4" height="4" fill="#99a"/><path d="M5.3 8 V27.5 H29.7 V8" fill="none" stroke="#d3dc3f" stroke-width="3.8"/><path d="M7 8 V25.6 H28 V8" fill="none" stroke="#3f7a34" stroke-width="1.3"/></svg>
<div style="left:312px;top:226px;width:166px;height:51px;background:#fff;border:1px solid #4a4a4a;border-radius:3px;"></div>
<span class="t" style="left:314px;top:230.76px;font-size:18px;letter-spacing:-0.007px;">Cabo</span>
<span class="t" style="left:314px;top:255.76px;font-size:18px;letter-spacing:0.230px;">L = 10,3 m; 16 mm</span>
<span class="t" style="left:469px;top:251.89px;font-size:19.5px;">²</span>
<svg style="left:73px;top:316px;" width="35" height="35" viewBox="0 0 35 35"><rect x="0.7" y="0.7" width="33.6" height="33.6" rx="7" fill="#fff" stroke="#555" stroke-width="1.2"/><path d="M13 15 L32.5 5" stroke="#d9a184" stroke-width="4.6"/><path d="M13 15 L32.5 5" stroke="#b87858" stroke-width="4.6" stroke-dasharray="0.8 1.6"/><path d="M13 26 L32.5 15" stroke="#d9a184" stroke-width="4.6"/><path d="M13 26 L32.5 15" stroke="#b87858" stroke-width="4.6" stroke-dasharray="0.8 1.6"/><path d="M14.5 14 L10 17 M14.5 25 L10.5 28" stroke="#8a8a8a" stroke-width="3.4"/><ellipse cx="6.6" cy="19.6" rx="3.4" ry="2.6" transform="rotate(-25 6.6 19.6)" fill="#fff" stroke="#6f6f6f" stroke-width="1.6"/><ellipse cx="7" cy="30" rx="3.2" ry="2.4" transform="rotate(-25 7 30)" fill="#fff" stroke="#6f6f6f" stroke-width="1.6"/></svg>
<div style="left:110px;top:295px;width:160px;height:77px;background:#fff;border:1px solid #4a4a4a;border-radius:3px;"></div>
<span class="t" style="left:113px;top:300.76px;font-size:18px;letter-spacing:-0.078px;">Terra sistema</span>
<span class="t" style="left:113px;top:325.76px;font-size:18px;letter-spacing:0.266px;">L = 18 m</span>
<span class="t" style="left:113px;top:350.76px;font-size:18px;letter-spacing:0.246px;">[R] = [0,2143] ohm</span>
<svg style="left:310px;top:303px;" width="35" height="35" viewBox="0 0 35 35"><rect x="0.7" y="0.7" width="33.6" height="33.6" rx="7" fill="#fff" stroke="#444" stroke-width="1.2"/><path d="M11 4 L31 24" stroke="#6f9a94" stroke-width="3"/><path d="M5 11 L26 32" stroke="#6f9a94" stroke-width="3"/><path d="M8.5 7.5 L14.5 3.5 M10 10 L15 6.5 M2.5 15 L8.5 11 M4 17.5 L9 14" stroke="#6f9a94" stroke-width="1.8"/></svg>
<div style="left:347px;top:295px;width:200px;height:51px;background:#fff;border:1px solid #4a4a4a;border-radius:3px;"></div>
<span class="t" style="left:350px;top:300.76px;font-size:18px;letter-spacing:0.109px;">Dispersor</span>
<span class="t" style="left:350px;top:325.76px;font-size:18px;letter-spacing:0.285px;">[R] = [0,20264] ohm</span>
<svg style="left:345px;top:373px;" width="35" height="35" viewBox="0 0 35 35"><rect x="0.7" y="0.7" width="33.6" height="33.6" rx="7" fill="#fff" stroke="#444" stroke-width="1.2"/><rect x="2.5" y="2.5" width="6" height="9" fill="#d99a78"/><rect x="26.5" y="2.5" width="6" height="9" fill="#d99a78"/><rect x="4" y="4" width="3.4" height="4" fill="#99a"/><rect x="27.6" y="4" width="3.4" height="4" fill="#99a"/><path d="M5.3 8 V27.5 H29.7 V8" fill="none" stroke="#d3dc3f" stroke-width="3.8"/><path d="M7 8 V25.6 H28 V8" fill="none" stroke="#3f7a34" stroke-width="1.3"/></svg>
<div style="left:382px;top:365px;width:167px;height:52px;background:#fff;border:1px solid #4a4a4a;border-radius:3px;"></div>
<span class="t" style="left:385px;top:370.76px;font-size:18px;letter-spacing:-0.257px;">Cabo</span>
<span class="t" style="left:385px;top:395.76px;font-size:18px;letter-spacing:0.026px;">L = 0,4 m; 16 mm</span>
<span class="t" style="left:526.5px;top:391.89px;font-size:19.5px;">²</span>
<svg style="left:380px;top:457px;" width="35" height="35" viewBox="0 0 35 35"><rect x="0.7" y="0.7" width="33.6" height="33.6" rx="7" fill="#fff" stroke="#555" stroke-width="1.2"/><path d="M13 15 L32.5 5" stroke="#d9a184" stroke-width="4.6"/><path d="M13 15 L32.5 5" stroke="#b87858" stroke-width="4.6" stroke-dasharray="0.8 1.6"/><path d="M13 26 L32.5 15" stroke="#d9a184" stroke-width="4.6"/><path d="M13 26 L32.5 15" stroke="#b87858" stroke-width="4.6" stroke-dasharray="0.8 1.6"/><path d="M14.5 14 L10 17 M14.5 25 L10.5 28" stroke="#8a8a8a" stroke-width="3.4"/><ellipse cx="6.6" cy="19.6" rx="3.4" ry="2.6" transform="rotate(-25 6.6 19.6)" fill="#fff" stroke="#6f6f6f" stroke-width="1.6"/><ellipse cx="7" cy="30" rx="3.2" ry="2.4" transform="rotate(-25 7 30)" fill="#fff" stroke="#6f6f6f" stroke-width="1.6"/></svg>
<div style="left:417px;top:435px;width:200px;height:77px;background:#fff;border:1px solid #4a4a4a;border-radius:3px;"></div>
<span class="t" style="left:420px;top:440.76px;font-size:18px;letter-spacing:0.302px;">Cabo nu Malha</span>
<span class="t" style="left:420px;top:465.76px;font-size:18px;letter-spacing:0.464px;">L = 121,5 m</span>
<span class="t" style="left:420px;top:490.76px;font-size:18px;letter-spacing:0.285px;">[R] = [0,20271] ohm</span>
<svg style="left:415px;top:539px;" width="35" height="35" viewBox="0 0 35 35"><rect x="0.7" y="0.7" width="33.6" height="33.6" rx="7" fill="#fff" stroke="#444" stroke-width="1.2"/><rect x="2.5" y="2.5" width="6" height="9" fill="#d99a78"/><rect x="26.5" y="2.5" width="6" height="9" fill="#d99a78"/><rect x="4" y="4" width="3.4" height="4" fill="#99a"/><rect x="27.6" y="4" width="3.4" height="4" fill="#99a"/><path d="M5.3 8 V27.5 H29.7 V8" fill="none" stroke="#d3dc3f" stroke-width="3.8"/><path d="M7 8 V25.6 H28 V8" fill="none" stroke="#3f7a34" stroke-width="1.3"/></svg>
<div style="left:452px;top:531px;width:167px;height:51px;background:#fff;border:1px solid #4a4a4a;border-radius:3px;"></div>
<span class="t" style="left:455px;top:536.76px;font-size:18px;letter-spacing:-0.257px;">Cabo</span>
<span class="t" style="left:455px;top:561.76px;font-size:18px;letter-spacing:0.245px;">L = 0,3 m; 16 mm</span>
<span class="t" style="left:600px;top:557.89px;font-size:19.5px;">²</span>
<svg style="left:450px;top:609px;" width="35" height="35" viewBox="0 0 35 35"><rect x="0.7" y="0.7" width="33.6" height="33.6" rx="7" fill="#fff" stroke="#444" stroke-width="1.2"/><path d="M11 4 L31 24" stroke="#6f9a94" stroke-width="3"/><path d="M5 11 L26 32" stroke="#6f9a94" stroke-width="3"/><path d="M8.5 7.5 L14.5 3.5 M10 10 L15 6.5 M2.5 15 L8.5 11 M4 17.5 L9 14" stroke="#6f9a94" stroke-width="1.8"/></svg>
<div style="left:487px;top:601px;width:200px;height:51px;background:#fff;border:1px solid #4a4a4a;border-radius:3px;"></div>
<span class="t" style="left:490px;top:606.76px;font-size:18px;letter-spacing:0.109px;">Dispersor</span>
<span class="t" style="left:490px;top:631.76px;font-size:18px;letter-spacing:0.285px;">[R] = [0,30564] ohm</span>
<svg style="left:0px;top:0px;" width="499" height="658" viewBox="4 257 499 658"><g fill="none"><path d="M401 748 C408 753 414 755 423 756.5" stroke="#1a1a1a" stroke-width="1.6"/><path d="M423 756.5 C450 760 480 761 503 764" stroke="#9a9a9a" stroke-width="1"/><path d="M404 750 C430 760 470 764 503 770" stroke="#b5b5b5" stroke-width="1"/></g></svg>
</div>
<div style="left:5px;top:917px;width:498px;height:20px;background:#f0f0f0;"></div>
<svg style="left:9px;top:921px;" width="9" height="12" viewBox="0 0 9 12"><path d="M7 1 L1.5 6 L7 11" fill="none" stroke="#444" stroke-width="1.7"/></svg>
<svg style="left:488px;top:921px;" width="9" height="12" viewBox="0 0 9 12"><path d="M2 1 L7.5 6 L2 11" fill="none" stroke="#444" stroke-width="1.7"/></svg>
<div style="left:25px;top:918px;width:41px;height:18px;background:#cdcdcd;"></div>
<div style="left:15px;top:948px;width:478px;height:49px;background:#e1e1e1;border:2px solid #0078d7;"></div>
<svg style="left:114px;top:954px;" width="40" height="39" viewBox="0 0 40 39"><defs><linearGradient id="dwgb" x1="0" y1="0" x2="0" y2="1"><stop offset="0" stop-color="#2297d6"/><stop offset="1" stop-color="#1668a8"/></linearGradient><linearGradient id="dwgy" x1="0" y1="0" x2="0" y2="1"><stop offset="0" stop-color="#ffd21a"/><stop offset="1" stop-color="#f2b600"/></linearGradient></defs><rect x="0" y="0" width="40" height="39" rx="2.5" fill="url(#dwgb)"/><path d="M0 13.5 H40 M12.7 0 V27" stroke="#cfe8f8" stroke-width="0.9"/><rect x="10" y="10.5" width="5.4" height="6" rx="1" fill="none" stroke="#eaf6ff" stroke-width="0.9"/><path d="M0 27 H40 V36.5 Q40 39 37.5 39 H2.5 Q0 39 0 36.5Z" fill="url(#dwgy)"/><text x="9" y="36.6" font-size="8.6" font-weight="bold" fill="#1a1a1a" font-family="Liberation Sans,sans-serif" textLength="21.5" lengthAdjust="spacingAndGlyphs">DWG</text></svg>
<span class="t" style="left:159px;top:965.88px;font-size:15.5px;letter-spacing:-0.371px;color:#000;">Desenhar o sistema de aterramento</span>
<div style="left:514px;top:173px;width:67px;height:26px;background:#f0f0f0;border-left:1px solid #fff;border-top:1px solid #fff;border-radius:3px 0 0 0;"></div>
<div style="left:582px;top:173px;width:122px;height:26px;background:#f0f0f0;border-top:1px solid #fff;"></div>
<div style="left:705px;top:173px;width:79px;height:26px;background:#f0f0f0;border-top:1px solid #fff;"></div>
<span class="t" style="left:518px;top:176.88px;font-size:15.5px;letter-spacing:-0.341px;color:#7a7a7a;">Início</span>
<div style="left:580px;top:172px;width:2px;height:26px;background:#6d6d6d;"></div>
<span class="t" style="left:586px;top:176.88px;font-size:15.5px;letter-spacing:-0.368px;color:#7a7a7a;">Parque eólico</span>
<svg style="left:685px;top:175px;" width="15" height="15" viewBox="0 0 15 15"><rect x="0.5" y="0.5" width="14" height="14" rx="2" fill="#8e8e8e" stroke="#6e6e6e"/><path d="M4.3 4.3 L10.7 10.7 M10.7 4.3 L4.3 10.7" stroke="#fff" stroke-width="1.7"/></svg>
<div style="left:703px;top:172px;width:2px;height:26px;background:#6d6d6d;"></div>
<span class="t" style="left:709px;top:176.88px;font-size:15.5px;letter-spacing:-1.312px;color:#7a7a7a;">EG1901</span>
<svg style="left:767px;top:175px;" width="15" height="15" viewBox="0 0 15 15"><rect x="0.5" y="0.5" width="14" height="14" rx="2" fill="#8e8e8e" stroke="#6e6e6e"/><path d="M4.3 4.3 L10.7 10.7 M10.7 4.3 L4.3 10.7" stroke="#fff" stroke-width="1.7"/></svg>
<div style="left:784px;top:171px;width:148px;height:28px;background:#f0f0f0;border-left:1px solid #fff;border-top:1px solid #fff;border-radius:3px 3px 0 0;border-right:2px solid #6d6d6d;"></div>
<span class="t" style="left:790px;top:177.88px;font-size:15.5px;letter-spacing:-0.966px;color:#000;">EG1811_ArcFlash</span>
<svg style="left:911px;top:175px;" width="15" height="15" viewBox="0 0 15 15"><rect x="0.5" y="0.5" width="14" height="14" rx="2" fill="#c8202c" stroke="#8f1018"/><path d="M4.3 4.3 L10.7 10.7 M10.7 4.3 L4.3 10.7" stroke="#fff" stroke-width="1.7"/></svg>
<div style="left:511px;top:198px;width:1409px;height:808px;background:#f0f0f0;border:1px solid #dcdcdc;"></div>
<div style="left:511px;top:1004px;width:1409px;height:2px;background:#7a7a7a;"></div>
<div style="left:515px;top:202px;width:1376px;height:778px;overflow:hidden;background:#fff;">
<div style="left:16px;top:0px;width:1360px;height:131px;background:#008080;"></div>
<div style="left:16px;top:0px;width:1px;height:131px;background:#8a8a00;"></div>
<div style="left:16px;top:130px;width:1360px;height:1px;background:#9a9000;"></div>
<div style="left:16px;top:131px;width:1px;height:603px;background:repeating-linear-gradient(to bottom,#9a9a00 0 3px,transparent 3px 6px);"></div>
<div style="left:16px;top:733px;width:1360px;height:1px;background:repeating-linear-gradient(to right,#9a9a00 0 3px,transparent 3px 6px);"></div>
<div style="left:33px;top:-6px;width:320px;height:46px;background:#96b4e6;border-radius:6px;"></div>
<div style="left:33px;top:67px;width:155px;height:120px;background:#96b4e6;border-radius:6px;"></div>
<div style="left:33px;top:214px;width:400px;height:165px;background:#96b4e6;border-radius:6px;"></div>
<div style="left:33px;top:406px;width:163px;height:169px;background:#96b4e6;border-radius:6px;"></div>
<div style="left:69px;top:0px;width:1px;height:720px;background:#000;"></div>
<div style="left:68px;top:720px;width:3px;height:58px;background:#222;border-left:1px solid #666;"></div>
<div style="left:69px;top:201px;width:1307px;height:1px;background:#000;"></div>
<div style="left:727px;top:201px;width:1px;height:3px;background:#000;"></div>
<div style="left:1060px;top:201px;width:1px;height:3px;background:#000;"></div>
<div style="left:84px;top:-12px;width:95px;height:37px;background:#fffaf0;border:1px solid #0000f0;border-radius:4px;"></div>
<span class="t" style="left:87px;top:1.84px;font-size:10px;letter-spacing:0.173px;color:#000;font-family:'DejaVu Sans Condensed','DejaVu Sans',sans-serif;">Formação:n.d.</span>
<span class="t" style="left:87px;top:13.84px;font-size:10px;letter-spacing:0.279px;color:#000;font-family:'DejaVu Sans Condensed','DejaVu Sans',sans-serif;">QdT (Ib):-0,004 %</span>
<svg style="left:65px;top:22px;" width="9" height="7" viewBox="0 0 9 7"><rect x="0" y="0" width="9" height="7" fill="#fff"/><rect x="1" y="1" width="7" height="1" fill="#000"/><rect x="1" y="3" width="7" height="1" fill="#000"/><rect x="1" y="5" width="7" height="1" fill="#000"/></svg>
<svg style="left:75px;top:17px;" width="8" height="16" viewBox="0 0 8 16"><path d="M4 1 V9" stroke="#000" stroke-width="1.2"/><path d="M1 4 L4 0.5 L7 4" fill="none" stroke="#000" stroke-width="1.2"/><path d="M4 10 V15" stroke="#000" stroke-width="1.2" stroke-dasharray="1.5 1"/><rect x="2.5" y="0" width="3" height="16" fill="none"/></svg>
<svg style="left:65px;top:34px;" width="9" height="9" viewBox="0 0 9 9"><circle cx="4.5" cy="4.5" r="3" fill="#7be07b" stroke="#1c5a1c" stroke-width="0.9"/></svg>
<div style="left:84px;top:68px;width:73px;height:29px;background:#fffaf0;border:1px solid #0000f0;border-radius:4px;"></div>
<span class="t" style="left:87px;top:73.64px;font-size:10px;letter-spacing:-0.351px;color:#000;font-family:'DejaVu Sans Condensed','DejaVu Sans',sans-serif;">CB02</span>
<span class="t" style="left:87px;top:85.44px;font-size:10px;letter-spacing:0.061px;color:#000;font-family:'DejaVu Sans Condensed','DejaVu Sans',sans-serif;">Sigla prot.:n.d.</span>
<div style="left:84px;top:100px;width:96px;height:65px;background:#fffaf0;border:1px solid #0000f0;border-radius:4px;"></div>
<span class="t" style="left:87px;top:105.64px;font-size:10px;letter-spacing:-0.056px;color:#000;font-family:'DejaVu Sans Condensed','DejaVu Sans',sans-serif;">Pd:361,594 kW</span>
<span class="t" style="left:87px;top:117.49px;font-size:10px;letter-spacing:0.034px;color:#000;font-family:'DejaVu Sans Condensed','DejaVu Sans',sans-serif;">Ib:6,933 A</span>
<span class="t" style="left:87px;top:129.34px;font-size:10px;letter-spacing:-0.043px;color:#000;font-family:'DejaVu Sans Condensed','DejaVu Sans',sans-serif;">Ikm max:2,496 kA</span>
<span class="t" style="left:87px;top:141.19px;font-size:10px;letter-spacing:-0.075px;color:#000;font-family:'DejaVu Sans Condensed','DejaVu Sans',sans-serif;">Formação:3x(1x16)</span>
<span class="t" style="left:87px;top:153.04px;font-size:10px;letter-spacing:0.279px;color:#000;font-family:'DejaVu Sans Condensed','DejaVu Sans',sans-serif;">QdT (Ib):-0,005 %</span>
<svg style="left:41px;top:100px;" width="9" height="10" viewBox="0 0 9 10"><defs><linearGradient id="sq302" x1="0" y1="0" x2="0" y2="1"><stop offset="0" stop-color="#ff9a30"/><stop offset="0.5" stop-color="#f4e020"/><stop offset="1" stop-color="#4cc830"/></linearGradient></defs><rect x="0.5" y="0.5" width="8" height="9" fill="#f6f6f2" stroke="#bdbdb8"/><rect x="2" y="2.6" width="5" height="5" fill="url(#sq302)"/></svg>
<svg style="left:66px;top:119px;" width="7" height="7" viewBox="0 0 7 7"><circle cx="3.5" cy="3.5" r="2" fill="#fff" stroke="#000" stroke-width="0.9"/></svg>
<svg style="left:65px;top:132px;" width="9" height="22" viewBox="0 0 9 22"><rect x="1.7" y="0.6" width="5.6" height="20.8" rx="2.8" fill="#0a3cff" stroke="#000" stroke-width="1"/><rect x="3" y="3" width="1" height="16" fill="#8fb0ff"/></svg>
<svg style="left:65px;top:169.5px;" width="9" height="7" viewBox="0 0 9 7"><rect x="0" y="0" width="9" height="7" fill="#fff"/><rect x="1" y="1" width="7" height="1" fill="#000"/><rect x="1" y="3" width="7" height="1" fill="#000"/><rect x="1" y="5" width="7" height="1" fill="#000"/></svg>
<svg style="left:75px;top:163px;" width="8" height="16" viewBox="0 0 8 16"><path d="M4 1 V9" stroke="#000" stroke-width="1.2"/><path d="M1 4 L4 0.5 L7 4" fill="none" stroke="#000" stroke-width="1.2"/><path d="M4 10 V15" stroke="#000" stroke-width="1.2" stroke-dasharray="1.5 1"/><rect x="2.5" y="0" width="3" height="16" fill="none"/></svg>
<svg style="left:65px;top:181px;" width="9" height="9" viewBox="0 0 9 9"><circle cx="4.5" cy="4.5" r="3" fill="#7be07b" stroke="#1c5a1c" stroke-width="0.9"/></svg>
<div style="left:79px;top:215px;width:119px;height:30px;background:#fffaf0;border:1px solid #0000f0;border-radius:4px;"></div>
<span class="t" style="left:82.5px;top:220.84px;font-size:10px;letter-spacing:-0.328px;color:#000;font-family:'DejaVu Sans Condensed','DejaVu Sans',sans-serif;">RL1</span>
<div style="left:81px;top:231px;width:115px;height:12px;overflow:hidden;">
<span class="t" style="left:1.5px;top:1.84px;font-size:10px;letter-spacing:0.026px;color:#000;font-family:'DejaVu Sans Condensed','DejaVu Sans',sans-serif;">Sigla prot.:SF2-36-31,5kA</span>
</div>
<div style="left:79px;top:247px;width:159px;height:18px;background:#fffaf0;border:1px solid #0000f0;border-radius:0px;"></div>
<span class="t" style="left:82.5px;top:252.84px;font-size:10px;letter-spacing:0.092px;color:#000;font-family:'DejaVu Sans Condensed','DejaVu Sans',sans-serif;">TC[3]: 100 A / 5 A; 15 VA; 10P20</span>
<div style="left:79px;top:267px;width:330px;height:30px;background:#fffaf0;border:1px solid #0000f0;border-radius:0px;"></div>
<span class="t" style="left:82.5px;top:272.84px;font-size:10px;letter-spacing:-0.293px;color:#000;font-family:'DejaVu Sans Condensed','DejaVu Sans',sans-serif;">50|51|51N</span>
<span class="t" style="left:82.5px;top:284.54px;font-size:10px;letter-spacing:-0.176px;color:#000;font-family:'DejaVu Sans Condensed','DejaVu Sans',sans-serif;">21B|25|27|27/2|37|46|47|59|59/2|59N</span>
<div style="left:79px;top:299px;width:94px;height:66px;background:#fffaf0;border:1px solid #0000f0;border-radius:4px;"></div>
<span class="t" style="left:82.5px;top:304.34px;font-size:10px;letter-spacing:-0.064px;color:#000;font-family:'DejaVu Sans Condensed','DejaVu Sans',sans-serif;">Pd:218,614 kW</span>
<span class="t" style="left:82.5px;top:316.21px;font-size:10px;letter-spacing:-0.006px;color:#000;font-family:'DejaVu Sans Condensed','DejaVu Sans',sans-serif;">Ib:4,011 A</span>
<span class="t" style="left:82.5px;top:328.08px;font-size:10px;letter-spacing:-0.068px;color:#000;font-family:'DejaVu Sans Condensed','DejaVu Sans',sans-serif;">Ikm max:2,545 kA</span>
<span class="t" style="left:82.5px;top:339.95px;font-size:10px;letter-spacing:0.173px;color:#000;font-family:'DejaVu Sans Condensed','DejaVu Sans',sans-serif;">Formação:n.d.</span>
<span class="t" style="left:82.5px;top:351.82px;font-size:10px;letter-spacing:0.267px;color:#000;font-family:'DejaVu Sans Condensed','DejaVu Sans',sans-serif;">QdT (Ib):-0,005 %</span>
<svg style="left:41px;top:247px;" width="10" height="10" viewBox="0 0 10 10"><path d="M0.5 0.5 H9.2 V4.6 L4.85 9 L0.5 4.6Z" fill="#fbfbf8" stroke="#8a8a8a" stroke-width="0.9"/><path d="M5.8 1.4 L3.8 4.6 H5.6 L4.2 7.4" stroke="#222" fill="none" stroke-width="0.9"/></svg>
<svg style="left:40px;top:257.5px;" width="12" height="11" viewBox="0 0 12 11"><path d="M2 5.4 L6 1.6 L10 5.4 L6 9.2Z" fill="#fff" stroke="#111" stroke-width="0.9"/><path d="M8.6 2.4 L10.4 1 M3.2 8.2 L1.6 9.6" stroke="#111" stroke-width="0.8"/><path d="M6 0 V1.6" stroke="#ccc" stroke-width="0.8"/></svg>
<svg style="left:41px;top:268px;" width="9" height="10" viewBox="0 0 9 10"><defs><linearGradient id="sq470" x1="0" y1="0" x2="0" y2="1"><stop offset="0" stop-color="#ff9a30"/><stop offset="0.5" stop-color="#f4e020"/><stop offset="1" stop-color="#4cc830"/></linearGradient></defs><rect x="0.5" y="0.5" width="8" height="9" fill="#f6f6f2" stroke="#bdbdb8"/><rect x="2" y="2.6" width="5" height="5" fill="url(#sq470)"/></svg>
<div style="left:68px;top:262px;width:3px;height:15px;background:#96b4e6;"></div>
<svg style="left:60px;top:244px;" width="20" height="52" viewBox="0 0 20 52"><ellipse cx="9" cy="8.3" rx="6.6" ry="4.4" fill="none" stroke="#fff" stroke-width="2.6"/><ellipse cx="9" cy="8.3" rx="6.6" ry="4.4" fill="none" stroke="#111" stroke-width="1"/><path d="M15.6 8.3 H19.5" stroke="#111" stroke-width="1"/><path d="M6.4 4.6 C4.8 6.8 4.8 9.8 6.4 12 M11.6 4.6 C13.2 6.8 13.2 9.8 11.6 12" stroke="#8aa0cc" stroke-width="0.8" fill="none"/><path d="M4.2 15.6 L9.6 24 L5.6 22.6Z" fill="#fff" stroke="#fff" stroke-width="2"/><path d="M4.2 15.6 L9.6 24 L5.6 22.6Z" fill="#111"/><path d="M5 15 L11 19" stroke="#fff" stroke-width="1" stroke-dasharray="1 1"/><path d="M9 24 V32.5" stroke="#b0b0b0" stroke-width="1.6"/><rect x="0.8" y="32.6" width="16.8" height="17" fill="#fff" stroke="#9a9a9a" stroke-width="1.2"/><path d="M0.8 38.3 H17.6 M0.8 44 H17.6" stroke="#444" stroke-width="0.9"/><path d="M3 35.6 H8 M10 35.6 H14.5 M4.5 41.2 H8.5 M10 41.2 H13.5 M5 46.8 H8 M9.5 46.8 H13.5" stroke="#222" stroke-width="1.8" stroke-dasharray="1.4 0.6"/></svg>
<svg style="left:66px;top:334px;" width="7" height="7" viewBox="0 0 7 7"><circle cx="3.5" cy="3.5" r="2" fill="#fff" stroke="#000" stroke-width="0.9"/></svg>
<svg style="left:65px;top:362px;" width="9" height="7" viewBox="0 0 9 7"><rect x="0" y="0" width="9" height="7" fill="#fff"/><rect x="1" y="1" width="7" height="1" fill="#000"/><rect x="1" y="3" width="7" height="1" fill="#000"/><rect x="1" y="5" width="7" height="1" fill="#000"/></svg>
<svg style="left:65px;top:373px;" width="9" height="9" viewBox="0 0 9 9"><circle cx="4.5" cy="4.5" r="3" fill="#7be07b" stroke="#1c5a1c" stroke-width="0.9"/></svg>
<div style="left:76px;top:407px;width:82px;height:30px;background:#fffaf0;border:1px solid #0000f0;border-radius:4px;"></div>
<span class="t" style="left:79px;top:412.64px;font-size:10px;letter-spacing:-0.048px;color:#000;font-family:'DejaVu Sans Condensed','DejaVu Sans',sans-serif;">TR01</span>
<span class="t" style="left:79px;top:424.74px;font-size:10px;letter-spacing:0.140px;color:#000;font-family:'DejaVu Sans Condensed','DejaVu Sans',sans-serif;">Grupo vet.:Dyn1</span>
<div style="left:76px;top:439px;width:112px;height:102px;background:#fffaf0;border:1px solid #0000f0;border-radius:4px;"></div>
<span class="t" style="left:79px;top:444.74px;font-size:10px;letter-spacing:-0.048px;color:#000;font-family:'DejaVu Sans Condensed','DejaVu Sans',sans-serif;">Pd:218,614 kW</span>
<span class="t" style="left:79px;top:456.64px;font-size:10px;letter-spacing:0.034px;color:#000;font-family:'DejaVu Sans Condensed','DejaVu Sans',sans-serif;">Ib:4,011 A</span>
<span class="t" style="left:79px;top:468.54px;font-size:10px;letter-spacing:-0.030px;color:#000;font-family:'DejaVu Sans Condensed','DejaVu Sans',sans-serif;">Ikm max:2,545 kA</span>
<span class="t" style="left:79px;top:480.44px;font-size:10px;letter-spacing:0.173px;color:#000;font-family:'DejaVu Sans Condensed','DejaVu Sans',sans-serif;">Formação:n.d.</span>
<span class="t" style="left:79px;top:492.34px;font-size:10px;letter-spacing:0.334px;color:#000;font-family:'DejaVu Sans Condensed','DejaVu Sans',sans-serif;">QdT (Ib):2,12 %</span>
<span class="t" style="left:79px;top:504.24px;font-size:10px;letter-spacing:0.145px;color:#000;font-family:'DejaVu Sans Condensed','DejaVu Sans',sans-serif;">Pnom tr.:300 kVA</span>
<span class="t" style="left:79px;top:516.14px;font-size:10px;letter-spacing:0.166px;color:#000;font-family:'DejaVu Sans Condensed','DejaVu Sans',sans-serif;">In tr.:5,02 A</span>
<span class="t" style="left:79px;top:528.04px;font-size:10px;letter-spacing:-0.016px;color:#000;font-family:'DejaVu Sans Condensed','DejaVu Sans',sans-serif;">Ib max. transf..:5,52 A</span>
<svg style="left:41px;top:439px;" width="9" height="10" viewBox="0 0 9 10"><defs><linearGradient id="sq641" x1="0" y1="0" x2="0" y2="1"><stop offset="0" stop-color="#ff9a30"/><stop offset="0.5" stop-color="#f4e020"/><stop offset="1" stop-color="#4cc830"/></linearGradient></defs><rect x="0.5" y="0.5" width="8" height="9" fill="#f6f6f2" stroke="#bdbdb8"/><rect x="2" y="2.6" width="5" height="5" fill="url(#sq641)"/></svg>
<svg style="left:66px;top:510px;" width="7" height="7" viewBox="0 0 7 7"><circle cx="3.5" cy="3.5" r="2" fill="#fff" stroke="#000" stroke-width="0.9"/></svg>
<svg style="left:65px;top:538px;" width="9" height="7" viewBox="0 0 9 7"><rect x="0" y="0" width="9" height="7" fill="#fff"/><rect x="1" y="1" width="7" height="1" fill="#000"/><rect x="1" y="3" width="7" height="1" fill="#000"/><rect x="1" y="5" width="7" height="1" fill="#000"/></svg>
<svg style="left:62px;top:554px;" width="15" height="21" viewBox="0 0 15 21"><circle cx="7.5" cy="6.2" r="5.6" fill="#fff" stroke="#666" stroke-width="1"/><circle cx="7.5" cy="14.6" r="5.6" fill="#fff" stroke="#666" stroke-width="1"/><path d="M5 8 L7.5 3.5 L10 8Z" fill="none" stroke="#777" stroke-width="0.8"/><path d="M5 12.5 L7.5 15 L10 12.5 M7.5 15 V18" fill="none" stroke="#777" stroke-width="0.8"/></svg>
<svg style="left:65px;top:572px;" width="9" height="9" viewBox="0 0 9 9"><circle cx="4.5" cy="4.5" r="3" fill="#8fe04a" stroke="#2f6a10" stroke-width="0.9"/></svg>
<svg style="left:30px;top:571px;" width="36" height="32" viewBox="0 0 36 32"><path d="M30 6 L10 14" stroke="#19e019" stroke-width="1.6"/><rect x="24" y="2.5" width="8" height="4" fill="#f4e100" stroke="#6b6200" stroke-width="0.8"/><path d="M10 13 V17 M3 17 H17 M5.5 20 H14.5 M8 23 H12" stroke="#000" stroke-width="1.3"/></svg>
<span class="t" style="left:21px;top:595.77px;font-size:5px;letter-spacing:0.104px;color:#444;font-family:'DejaVu Sans Condensed','DejaVu Sans',sans-serif;">Coletor</span>
<div style="left:80px;top:603px;width:73px;height:29px;background:#fffaf0;border:1px solid #0000f0;border-radius:4px;"></div>
<span class="t" style="left:83.5px;top:607.44px;font-size:10px;letter-spacing:-0.351px;color:#000;font-family:'DejaVu Sans Condensed','DejaVu Sans',sans-serif;">CB03</span>
<span class="t" style="left:83.5px;top:619.54px;font-size:10px;letter-spacing:0.061px;color:#000;font-family:'DejaVu Sans Condensed','DejaVu Sans',sans-serif;">Sigla prot.:n.d.</span>
<div style="left:80px;top:635px;width:135px;height:65px;background:#fffaf0;border:1px solid #0000f0;border-radius:4px;"></div>
<span class="t" style="left:83.5px;top:639.64px;font-size:10px;letter-spacing:-0.064px;color:#000;font-family:'DejaVu Sans Condensed','DejaVu Sans',sans-serif;">Pd:217,844 kW</span>
<span class="t" style="left:83.5px;top:651.57px;font-size:10px;letter-spacing:-0.134px;color:#000;font-family:'DejaVu Sans Condensed','DejaVu Sans',sans-serif;">Ib:359,445 A</span>
<span class="t" style="left:83.5px;top:663.50px;font-size:10px;letter-spacing:-0.106px;color:#000;font-family:'DejaVu Sans Condensed','DejaVu Sans',sans-serif;">Ikm max:11,604 kA</span>
<span class="t" style="left:83.5px;top:675.43px;font-size:10px;letter-spacing:-0.236px;color:#000;font-family:'DejaVu Sans Condensed','DejaVu Sans',sans-serif;">Formação:3x(1x240)+1x120</span>
<span class="t" style="left:83.5px;top:687.36px;font-size:10px;letter-spacing:0.205px;color:#000;font-family:'DejaVu Sans Condensed','DejaVu Sans',sans-serif;">QdT (Ib):0,422 %</span>
<svg style="left:41px;top:634px;" width="9" height="10" viewBox="0 0 9 10"><defs><linearGradient id="sq836" x1="0" y1="0" x2="0" y2="1"><stop offset="0" stop-color="#ff9a30"/><stop offset="0.5" stop-color="#f4e020"/><stop offset="1" stop-color="#4cc830"/></linearGradient></defs><rect x="0.5" y="0.5" width="8" height="9" fill="#f6f6f2" stroke="#bdbdb8"/><rect x="2" y="2.6" width="5" height="5" fill="url(#sq836)"/></svg>
<svg style="left:66px;top:654px;" width="7" height="7" viewBox="0 0 7 7"><circle cx="3.5" cy="3.5" r="2" fill="#fff" stroke="#000" stroke-width="0.9"/></svg>
<svg style="left:65px;top:667px;" width="9" height="21" viewBox="0 0 9 21"><rect x="1.7" y="0.6" width="5.6" height="19.8" rx="2.8" fill="#0a3cff" stroke="#000" stroke-width="1"/><rect x="3" y="3" width="1" height="15" fill="#8fb0ff"/></svg>
<svg style="left:65px;top:701px;" width="9" height="9" viewBox="0 0 9 9"><rect x="0" y="0" width="9" height="9" fill="#fff"/><rect x="1" y="1" width="7" height="1" fill="#000"/><rect x="1" y="3" width="7" height="1" fill="#000"/><rect x="1" y="5" width="7" height="1" fill="#000"/><rect x="1" y="7" width="7" height="1" fill="#000"/></svg>
<svg style="left:65px;top:715.5px;" width="9" height="9" viewBox="0 0 9 9"><path d="M4.5 0.8 L8.2 4.5 L4.5 8.2 L0.8 4.5Z" fill="#90e090" stroke="#1c5a1c" stroke-width="0.9"/></svg>
</div>
<div style="left:1891px;top:202px;width:24px;height:800px;background:#f0f0f0;border-left:1px solid #fff;border-top:1px solid #b5b5b5;"></div>
<div style="left:1915px;top:199px;width:3px;height:806px;background:#fafafa;"></div>
<svg style="left:1897px;top:209.5px;" width="13" height="9" viewBox="0 0 13 9"><path d="M1.5 7 L6.5 2 L11.5 7" fill="none" stroke="#555" stroke-width="1.8"/></svg>
<div style="left:1918px;top:198px;width:2px;height:808px;background:#6a6a6a;"></div>
<div style="left:515px;top:980px;width:1376px;height:21px;background:#fff;border-top:1px solid #8c8c8c;border-left:1px solid #8c8c8c;"></div>
<div style="left:515px;top:1001px;width:1376px;height:3px;background:#f4f4f4;"></div>
<svg style="left:524px;top:984px;" width="15" height="15" viewBox="0 0 15 15"><circle cx="7.5" cy="7.5" r="6.5" fill="#cfd8e6" stroke="#4a5a78"/><path d="M7.5 2.5 V12.5 M2.5 7.5 H12.5" stroke="#1c2c50" stroke-width="1.1"/><path d="M7.5 1.5 L9 3.5 H6Z M7.5 13.5 L9 11.5 H6Z M1.5 7.5 L3.5 6 V9Z M13.5 7.5 L11.5 6 V9Z" fill="#1c2c50"/></svg>
<div style="left:557px;top:989px;width:135px;height:5px;background:#e4e4e4;border:1px solid #d2d2d2;"></div>
<div style="left:599px;top:983px;width:8px;height:17px;background:#0078d7;"></div>
<svg style="left:706px;top:984px;" width="15" height="15" viewBox="0 0 15 15"><circle cx="7.5" cy="7.5" r="6.5" fill="#b8c4d8" stroke="#5a6a88"/><text x="2.6" y="10" font-size="6.5" fill="#1c2c50" font-family="Liberation Sans,sans-serif" font-weight="bold">100</text></svg>
<svg style="left:741px;top:984px;" width="14" height="14" viewBox="0 0 14 14"><rect x="0.5" y="0.5" width="13" height="13" rx="2" fill="#141c38"/><rect x="2" y="2" width="10" height="3.4" fill="#5f6f9c"/><rect x="2" y="7" width="10" height="5" fill="#a3b3d6"/></svg>
<div style="left:765px;top:405px;width:1147px;height:602px;background:#fff;box-shadow:0 3px 14px 2px rgba(0,0,0,0.38),0 0 3px rgba(0,0,0,0.35);"></div>
<div style="left:765px;top:405px;width:1147px;height:602px;background:#f0f0f0;border:1px solid #6f6f6f;"></div>
<div style="left:766px;top:1005px;width:1145px;height:1px;background:#fdfdfd;"></div>
<div style="left:766px;top:406px;width:1145px;height:37px;background:#fff;"></div>
<svg style="left:775px;top:414px;" width="20" height="20" viewBox="0 0 20 20"><rect x="0.5" y="0.5" width="19" height="19" fill="#fff" stroke="#2a62d9" stroke-width="1.2"/><path d="M9.3 2.5 H11.1 L14.8 17.5 H12.6 L10.2 5.5 L7.8 17.5 H5.6Z" fill="#2f63d6"/><path d="M9 6 L7.2 15 H13.2 L11.4 6" fill="#8fb0ee" opacity="0.55"/><path d="M6.6 14.2 H13.8" stroke="#2f63d6" stroke-width="1.7"/></svg>
<span class="t" style="left:800px;top:416.88px;font-size:15.5px;letter-spacing:-0.417px;color:#000;">Rede de aterramento [.\P10V2.1_Ground.dwg]</span>
<div style="left:1758px;top:424px;width:14px;height:1px;background:#111;"></div>
<svg style="left:1816px;top:418px;" width="13" height="13" viewBox="0 0 13 13"><rect x="0.5" y="0.5" width="11" height="11" fill="none" stroke="#111" stroke-width="1.1"/></svg>
<svg style="left:1874px;top:418px;" width="14" height="14" viewBox="0 0 14 14"><path d="M0.5 0.5 L12.5 12.5 M12.5 0.5 L0.5 12.5" stroke="#111" stroke-width="1.2" fill="none"/></svg>
<svg style="left:793px;top:447.5px;" width="18" height="18" viewBox="0 0 18 18"><path d="M9 0 V6.5 M9 11.5 V18 M0 9 H6.5 M11.5 9 H18" stroke="#222" stroke-width="1"/><rect x="6.6" y="6.6" width="4.8" height="4.8" rx="1" fill="none" stroke="#222" stroke-width="1.2"/></svg>
<span class="t" style="left:771px;top:469.88px;font-size:15.5px;letter-spacing:-0.453px;color:#000;">Selecione</span>
<svg style="left:866px;top:453px;" width="20" height="14" viewBox="0 0 20 14"><rect x="0" y="0" width="20" height="7" fill="#c07a58"/><rect x="3.5" y="3" width="3.2" height="11" fill="#d6dc3c"/><rect x="5.5" y="3" width="1.2" height="11" fill="#6f9a30"/><rect x="3.9" y="2.4" width="2.4" height="2.2" fill="#aab"/><rect x="8.3" y="3" width="3.2" height="11" fill="#d6dc3c"/><rect x="10.3" y="3" width="1.2" height="11" fill="#6f9a30"/><rect x="8.700000000000001" y="2.4" width="2.4" height="2.2" fill="#aab"/><rect x="13" y="3" width="3.2" height="11" fill="#d6dc3c"/><rect x="15" y="3" width="1.2" height="11" fill="#6f9a30"/><rect x="13.4" y="2.4" width="2.4" height="2.2" fill="#aab"/></svg>
<span class="t" style="left:852px;top:469.88px;font-size:15.5px;letter-spacing:-0.138px;color:#000;">Coletor</span>
<svg style="left:915px;top:470px;" width="9" height="5" viewBox="0 0 9 5"><path d="M0 0.3 H9 L4.5 4.8Z" fill="#111"/></svg>
<svg style="left:992px;top:447px;" width="23" height="21" viewBox="0 0 23 21"><rect x="2.6" y="1.6" width="13" height="11" fill="#e9e9ec" stroke="#a2a2a2" stroke-width="1.3"/><circle cx="15.6" cy="12.4" r="5" fill="#dedfe2" stroke="#a8a8a8" stroke-width="1.2"/><rect x="0.8" y="9.8" width="3.8" height="3.8" fill="#fff" stroke="#9cc3f5" stroke-width="1"/></svg>
<span class="t" style="left:949px;top:469.88px;font-size:15.5px;letter-spacing:-0.411px;color:#8a8a8a;">Desenhar/Inserir</span>
<svg style="left:1099px;top:446px;" width="22" height="22" viewBox="0 0 22 22"><rect x="1.6" y="1.6" width="16.4" height="12.6" fill="none" stroke="#8ed6a8" stroke-width="1.4" stroke-dasharray="2.4 1.4"/><rect x="4" y="4" width="9.6" height="8" fill="#9bdab2"/><path d="M12.6 7.5 V19 L15.2 16.4 L17 20.4 L18.8 19.6 L17 15.8 H20.6Z" fill="#fff" stroke="#8a8a8a" stroke-width="1"/></svg>
<span class="t" style="left:1085px;top:469.88px;font-size:15.5px;letter-spacing:0.113px;color:#8a8a8a;">Atribuir</span>
<svg style="left:1207px;top:447px;" width="20" height="20" viewBox="0 0 20 20"><path d="M3 9 A7 7 0 0 1 16.4 7.2" fill="none" stroke="#2f86e0" stroke-width="2"/><path d="M17 11 A7 7 0 0 1 3.6 12.8" fill="none" stroke="#2f86e0" stroke-width="2"/><path d="M13.6 7 H19.4 L16.8 11.2Z" fill="#2f86e0"/><path d="M6.4 13 H0.6 L3.2 8.8Z" fill="#2f86e0"/></svg>
<span class="t" style="left:1146px;top:469.88px;font-size:15.5px;letter-spacing:-0.231px;color:#000;">Atualizar do desenho</span>
<div style="left:1295px;top:446px;width:1px;height:50px;background:#8f8f8f;"></div>
<svg style="left:1363px;top:453px;" width="12" height="16" viewBox="0 0 12 16"><path d="M2 1 V15" stroke="#8a8a8a" stroke-width="1.4"/><path d="M2.5 2 C6 0.5 8 4 11 2.5 L9.5 8 C7 9.5 5 6.5 2.5 8Z" fill="#5fa0dd"/></svg>
<span class="t" style="left:1308px;top:469.88px;font-size:15.5px;letter-spacing:-0.117px;color:#8a8a8a;">Coletor principal</span>
<svg style="left:1439px;top:448px;" width="22" height="19" viewBox="0 0 22 19"><path d="M1.5 1.5 H14 L20 6 V16.5 H1.5Z" fill="#fbf6d8" stroke="#d9d2b0"/><path d="M10 15 L18 7 L20 9 L12 17 L9.5 17.5Z" fill="#f2d9a0" stroke="#c9a868" stroke-width="0.8"/></svg>
<span class="t" style="left:1430px;top:469.88px;font-size:15.5px;letter-spacing:-0.248px;color:#8a8a8a;">Editar</span>
<svg style="left:1493px;top:448px;" width="18" height="18" viewBox="0 0 18 18"><path d="M2 3 C6 6 10 10 16 16" stroke="#e87878" stroke-width="2.2" fill="none"/><path d="M15 1.5 C10 6 6 11 2.5 16.5" stroke="#e46a6a" stroke-width="2.2" fill="none"/></svg>
<span class="t" style="left:1480px;top:469.88px;font-size:15.5px;letter-spacing:-0.501px;color:#8a8a8a;">Excluir</span>
<div style="left:1531px;top:446px;width:1px;height:50px;background:#8f8f8f;"></div>
<svg style="left:1589px;top:447px;" width="18" height="20" viewBox="0 0 18 20"><rect x="0.8" y="0.8" width="16.4" height="18.4" fill="#fff" stroke="#111" stroke-width="1.6"/><path d="M6.2 1 V19" stroke="#111" stroke-width="1.3"/><path d="M11.8 1 V19" stroke="#111" stroke-width="1.3"/><path d="M1 4.6 H17" stroke="#111" stroke-width="1.3"/><path d="M1 8.2 H17" stroke="#111" stroke-width="1.3"/><path d="M1 11.8 H17" stroke="#111" stroke-width="1.3"/><path d="M1 15.4 H17" stroke="#111" stroke-width="1.3"/></svg>
<span class="t" style="left:1544px;top:469.88px;font-size:15.5px;letter-spacing:-0.382px;color:#000;">Desenhar tabela</span>
<svg style="left:1685px;top:448px;" width="16" height="17" viewBox="0 0 16 17"><rect x="1" y="1" width="13.5" height="3.2" rx="1.5" fill="#1f6fb2"/><rect x="1" y="6.6" width="13.5" height="3.2" rx="1.5" fill="#1f6fb2"/><rect x="1" y="12.2" width="13.5" height="3.2" rx="1.5" fill="#1f6fb2"/><rect x="1" y="3" width="13.5" height="1.2" fill="#134a7c"/><rect x="1" y="8.6" width="13.5" height="1.2" fill="#134a7c"/><rect x="1" y="14.2" width="13.5" height="1.2" fill="#134a7c"/></svg>
<span class="t" style="left:1663px;top:469.88px;font-size:15.5px;letter-spacing:0.077px;color:#000;">Utilidade</span>
<div style="left:767px;top:498px;width:273px;height:463px;background:#fff;border:1px solid #828790;border-left:none;"></div>
<div style="left:767px;top:499px;width:251px;height:440px;overflow:hidden;background:#fff;">
<span class="t" style="left:7.5px;top:6.88px;font-size:15.5px;letter-spacing:-0.211px;color:#000;">Nome</span>
<div style="left:238px;top:0px;width:1px;height:27px;background:#e0e0e0;"></div>
<span class="t" style="left:244px;top:6.88px;font-size:15.5px;color:#000;">Tipo</span>
<svg style="left:7px;top:39px;" width="8" height="8" viewBox="0 0 8 8"><path d="M7.5 0.5 V7.5 H0.5Z" fill="#404040"/></svg>
<svg style="left:19px;top:36.60000000000002px;" width="29" height="21" viewBox="0 0 29 21"><rect x="0" y="0" width="29" height="11" fill="#c07a58"/><rect x="5" y="4" width="4" height="17" fill="#d6dc3c"/><rect x="7.6" y="4" width="1.4" height="17" fill="#6f9a30"/><rect x="5.5" y="3.4" width="3" height="3" fill="#aab"/><rect x="12.5" y="4" width="4" height="17" fill="#d6dc3c"/><rect x="15.1" y="4" width="1.4" height="17" fill="#6f9a30"/><rect x="13.0" y="3.4" width="3" height="3" fill="#aab"/><rect x="20" y="4" width="4" height="17" fill="#d6dc3c"/><rect x="22.6" y="4" width="1.4" height="17" fill="#6f9a30"/><rect x="20.5" y="3.4" width="3" height="3" fill="#aab"/></svg>
<span class="t" style="left:55.5px;top:35.88px;font-size:15.5px;letter-spacing:-0.355px;color:#000;">Nós de aterramento (cole...</span>
<svg style="left:35px;top:60px;" width="30" height="31" viewBox="0 0 30 31"><defs><radialGradient id="gb574" cx="0.5" cy="0.36" r="0.62"><stop offset="0" stop-color="#e6fbdc"/><stop offset="0.5" stop-color="#7fdf62"/><stop offset="1" stop-color="#3dbb20"/></radialGradient>
<linearGradient id="gr574" x1="0" y1="0" x2="0" y2="1"><stop offset="0" stop-color="#8f8f8f"/><stop offset="0.5" stop-color="#c4c4c4"/><stop offset="1" stop-color="#f0f0f0"/></linearGradient></defs>
<circle cx="15" cy="15" r="14.8" fill="url(#gr574)"/><circle cx="15" cy="15" r="11" fill="url(#gb574)" stroke="#6a9a5a" stroke-width="0.7"/><ellipse cx="15" cy="9.5" rx="7.5" ry="4.4" fill="#fff" opacity="0.4"/></svg>
<span class="t" style="left:71.29999999999995px;top:67.88px;font-size:15.5px;letter-spacing:-0.209px;color:#000;">Coletor</span>
<span class="t" style="left:243px;top:67.88px;font-size:15.5px;color:#000;">Nó</span>
<svg style="left:35px;top:92px;" width="30" height="31" viewBox="0 0 30 31"><defs><radialGradient id="gb606" cx="0.5" cy="0.36" r="0.62"><stop offset="0" stop-color="#e6fbdc"/><stop offset="0.5" stop-color="#7fdf62"/><stop offset="1" stop-color="#3dbb20"/></radialGradient>
<linearGradient id="gr606" x1="0" y1="0" x2="0" y2="1"><stop offset="0" stop-color="#8f8f8f"/><stop offset="0.5" stop-color="#c4c4c4"/><stop offset="1" stop-color="#f0f0f0"/></linearGradient></defs>
<circle cx="15" cy="15" r="14.8" fill="url(#gr606)"/><circle cx="15" cy="15" r="11" fill="url(#gb606)" stroke="#6a9a5a" stroke-width="0.7"/><ellipse cx="15" cy="9.5" rx="7.5" ry="4.4" fill="#fff" opacity="0.4"/><path d="M17.5 11 V30" stroke="#3a2a2a" stroke-width="2"/><path d="M18.5 10.5 C22 9 24.5 14.5 30 12.5 L27.5 19.5 C24.5 22 21.5 17.5 18.5 20Z" fill="#1e7fe0"/></svg>
<span class="t" style="left:71.29999999999995px;top:99.88px;font-size:15.5px;letter-spacing:-0.111px;color:#000;">Coletor principal</span>
<span class="t" style="left:243px;top:99.88px;font-size:15.5px;color:#000;">Nó</span>
<svg style="left:7px;top:135px;" width="8" height="8" viewBox="0 0 8 8"><path d="M7.5 0.5 V7.5 H0.5Z" fill="#404040"/></svg>
<svg style="left:19px;top:124px;" width="30" height="30" viewBox="0 0 30 30"><path d="M9 2 L29 22" stroke="#7fa39e" stroke-width="3"/><path d="M3 9 L24 30" stroke="#7fa39e" stroke-width="3"/><path d="M6.5 5.5 L12.5 1.5 M8 8 L13 4.5 M0.5 13 L6.5 9 M2 15.5 L7 12" stroke="#7fa39e" stroke-width="1.8"/></svg>
<span class="t" style="left:55.5px;top:131.88px;font-size:15.5px;letter-spacing:-0.356px;color:#000;">Eletrodos de aterramento...</span>
<svg style="left:35px;top:156px;" width="30" height="31" viewBox="0 0 30 31"><defs><radialGradient id="gb670" cx="0.5" cy="0.36" r="0.62"><stop offset="0" stop-color="#e6fbdc"/><stop offset="0.5" stop-color="#7fdf62"/><stop offset="1" stop-color="#3dbb20"/></radialGradient>
<linearGradient id="gr670" x1="0" y1="0" x2="0" y2="1"><stop offset="0" stop-color="#8f8f8f"/><stop offset="0.5" stop-color="#c4c4c4"/><stop offset="1" stop-color="#f0f0f0"/></linearGradient></defs>
<circle cx="15" cy="15" r="14.8" fill="url(#gr670)"/><circle cx="15" cy="15" r="11" fill="url(#gb670)" stroke="#6a9a5a" stroke-width="0.7"/><ellipse cx="15" cy="9.5" rx="7.5" ry="4.4" fill="#fff" opacity="0.4"/></svg>
<span class="t" style="left:71.29999999999995px;top:163.88px;font-size:15.5px;letter-spacing:-0.446px;color:#000;">Dispersor</span>
<span class="t" style="left:243px;top:163.88px;font-size:15.5px;color:#000;">Ha</span>
<svg style="left:7px;top:199px;" width="8" height="8" viewBox="0 0 8 8"><path d="M7.5 0.5 V7.5 H0.5Z" fill="#404040"/></svg>
<svg style="left:19px;top:188px;" width="30" height="32" viewBox="0 0 30 32"><path d="M11 13 L30 3" stroke="#d9a184" stroke-width="4.6"/><path d="M11 13 L30 3" stroke="#b87858" stroke-width="4.6" stroke-dasharray="0.8 1.6"/><path d="M11 25 L30 14" stroke="#d9a184" stroke-width="4.6"/><path d="M11 25 L30 14" stroke="#b87858" stroke-width="4.6" stroke-dasharray="0.8 1.6"/><path d="M12.5 12 L8 15 M12.5 24 L8.5 27" stroke="#8a8a8a" stroke-width="3.4"/><ellipse cx="4.6" cy="17.6" rx="3.4" ry="2.6" transform="rotate(-25 4.6 17.6)" fill="#fff" stroke="#6f6f6f" stroke-width="1.6"/><ellipse cx="5" cy="29" rx="3.2" ry="2.4" transform="rotate(-25 5 29)" fill="#fff" stroke="#6f6f6f" stroke-width="1.6"/></svg>
<span class="t" style="left:55.5px;top:195.88px;font-size:15.5px;letter-spacing:-0.356px;color:#000;">Eletrodos de aterramento...</span>
<svg style="left:23px;top:231px;" width="8" height="8" viewBox="0 0 8 8"><path d="M7.5 0.5 V7.5 H0.5Z" fill="#404040"/></svg>
<svg style="left:35px;top:220px;" width="30" height="31" viewBox="0 0 30 31"><defs><radialGradient id="gb734" cx="0.5" cy="0.36" r="0.62"><stop offset="0" stop-color="#e6fbdc"/><stop offset="0.5" stop-color="#7fdf62"/><stop offset="1" stop-color="#3dbb20"/></radialGradient>
<linearGradient id="gr734" x1="0" y1="0" x2="0" y2="1"><stop offset="0" stop-color="#8f8f8f"/><stop offset="0.5" stop-color="#c4c4c4"/><stop offset="1" stop-color="#f0f0f0"/></linearGradient></defs>
<circle cx="15" cy="15" r="14.8" fill="url(#gr734)"/><circle cx="15" cy="15" r="11" fill="url(#gb734)" stroke="#6a9a5a" stroke-width="0.7"/><ellipse cx="15" cy="9.5" rx="7.5" ry="4.4" fill="#fff" opacity="0.4"/></svg>
<span class="t" style="left:71.29999999999995px;top:227.88px;font-size:15.5px;letter-spacing:-0.447px;color:#000;">Cabo nu Malha</span>
<span class="t" style="left:243px;top:227.88px;font-size:15.5px;color:#000;">Di</span>
<span class="t" style="left:53.200000000000045px;top:259.88px;font-size:15.5px;letter-spacing:-0.492px;color:#000;">L = 121,5 m</span>
<svg style="left:23px;top:295px;" width="8" height="8" viewBox="0 0 8 8"><path d="M7.5 0.5 V7.5 H0.5Z" fill="#404040"/></svg>
<svg style="left:35px;top:284px;" width="30" height="31" viewBox="0 0 30 31"><defs><radialGradient id="gb798" cx="0.5" cy="0.36" r="0.62"><stop offset="0" stop-color="#e6fbdc"/><stop offset="0.5" stop-color="#7fdf62"/><stop offset="1" stop-color="#3dbb20"/></radialGradient>
<linearGradient id="gr798" x1="0" y1="0" x2="0" y2="1"><stop offset="0" stop-color="#8f8f8f"/><stop offset="0.5" stop-color="#c4c4c4"/><stop offset="1" stop-color="#f0f0f0"/></linearGradient></defs>
<circle cx="15" cy="15" r="14.8" fill="url(#gr798)"/><circle cx="15" cy="15" r="11" fill="url(#gb798)" stroke="#6a9a5a" stroke-width="0.7"/><ellipse cx="15" cy="9.5" rx="7.5" ry="4.4" fill="#fff" opacity="0.4"/></svg>
<span class="t" style="left:71.29999999999995px;top:291.88px;font-size:15.5px;letter-spacing:-0.547px;color:#000;">Terra sistema</span>
<span class="t" style="left:243px;top:291.88px;font-size:15.5px;color:#000;">Di</span>
<span class="t" style="left:53.200000000000045px;top:323.88px;font-size:15.5px;letter-spacing:-0.421px;color:#000;">L = 18 m</span>
<svg style="left:7px;top:359px;" width="8" height="8" viewBox="0 0 8 8"><path d="M7.5 0.5 V7.5 H0.5Z" fill="#404040"/></svg>
<svg style="left:19px;top:348px;" width="30" height="28" viewBox="0 0 30 28"><rect x="0" y="0" width="6" height="8" fill="#d99a78"/><rect x="23.5" y="0" width="6" height="8" fill="#d99a78"/><rect x="1.3" y="1.3" width="3.4" height="3.4" fill="#99a"/><rect x="24.8" y="1.3" width="3.4" height="3.4" fill="#99a"/><path d="M3 5 V25.5 H26.5 V5" fill="none" stroke="#d3dc3f" stroke-width="3.4"/><path d="M4.4 5 V24 H25.2 V5" fill="none" stroke="#3f7a34" stroke-width="1"/></svg>
<span class="t" style="left:54.700000000000045px;top:355.88px;font-size:15.5px;letter-spacing:-0.700px;color:#000;">Cabos</span>
<svg style="left:23px;top:391px;" width="8" height="8" viewBox="0 0 8 8"><path d="M7.5 0.5 V7.5 H0.5Z" fill="#404040"/></svg>
<svg style="left:35px;top:380px;" width="30" height="31" viewBox="0 0 30 31"><defs><radialGradient id="gb894" cx="0.5" cy="0.36" r="0.62"><stop offset="0" stop-color="#e6fbdc"/><stop offset="0.5" stop-color="#7fdf62"/><stop offset="1" stop-color="#3dbb20"/></radialGradient>
<linearGradient id="gr894" x1="0" y1="0" x2="0" y2="1"><stop offset="0" stop-color="#8f8f8f"/><stop offset="0.5" stop-color="#c4c4c4"/><stop offset="1" stop-color="#f0f0f0"/></linearGradient></defs>
<circle cx="15" cy="15" r="14.8" fill="url(#gr894)"/><circle cx="15" cy="15" r="11" fill="url(#gb894)" stroke="#6a9a5a" stroke-width="0.7"/><ellipse cx="15" cy="9.5" rx="7.5" ry="4.4" fill="#fff" opacity="0.4"/></svg>
<span class="t" style="left:71.29999999999995px;top:387.88px;font-size:15.5px;letter-spacing:-0.763px;color:#000;">Cabo</span>
<span class="t" style="left:243px;top:387.88px;font-size:15.5px;color:#000;">Ca</span>
<span class="t" style="left:53.200000000000045px;top:419.88px;font-size:15.5px;letter-spacing:-0.464px;color:#000;">L = 0,3 m</span>
</div>
<div style="left:1018px;top:499px;width:20px;height:440px;background:#f0f0f0;"></div>
<svg style="left:1022px;top:505px;" width="12" height="8" viewBox="0 0 12 8"><path d="M1 6.5 L6 1.5 L11 6.5" fill="none" stroke="#505050" stroke-width="1.7"/></svg>
<svg style="left:1022px;top:923px;" width="12" height="8" viewBox="0 0 12 8"><path d="M1 1.5 L6 6.5 L11 1.5" fill="none" stroke="#505050" stroke-width="1.7"/></svg>
<div style="left:1018px;top:521px;width:19px;height:216px;background:#a6a6a6;"></div>
<div style="left:767px;top:939px;width:272px;height:20px;background:#f0f0f0;"></div>
<svg style="left:774px;top:943px;" width="9" height="12" viewBox="0 0 9 12"><path d="M7 1 L1.5 6 L7 11" fill="none" stroke="#444" stroke-width="1.7"/></svg>
<svg style="left:1002px;top:943px;" width="9" height="12" viewBox="0 0 9 12"><path d="M2 1 L7.5 6 L2 11" fill="none" stroke="#444" stroke-width="1.7"/></svg>
<div style="left:789px;top:940px;width:67px;height:18px;background:#cdcdcd;"></div>
<div style="left:777px;top:972px;width:92px;height:27px;background:#e1e1e1;border:1px solid #adadad;"></div>
<span class="t" style="left:803.3px;top:977.88px;font-size:15.5px;letter-spacing:-0.772px;color:#000;">Salvar</span>
<div style="left:937px;top:972px;width:92px;height:27px;background:#e1e1e1;border:1px solid #adadad;"></div>
<span class="t" style="left:953.9px;top:977.88px;font-size:15.5px;letter-spacing:-0.616px;color:#000;">Cancelar</span>
<div style="left:1046px;top:500px;width:64px;height:26px;background:#f0f0f0;border:1px solid #d9d9d9;"></div>
<span class="t" style="left:1052px;top:505.88px;font-size:15.5px;letter-spacing:-0.107px;color:#000;">Arquivo</span>
<div style="left:1109px;top:500px;width:75px;height:26px;background:#f0f0f0;border:1px solid #d9d9d9;"></div>
<span class="t" style="left:1115.9px;top:505.88px;font-size:15.5px;letter-spacing:-0.351px;color:#000;">Visualizar</span>
<div style="left:1044px;top:525px;width:866px;height:76px;background:#fff;border:1px solid #d9d9d9;"></div>
<div style="left:1183px;top:498px;width:73px;height:29px;background:#fff;border:1px solid #d9d9d9;border-bottom:none;"></div>
<span class="t" style="left:1191.3px;top:503.88px;font-size:15.5px;letter-spacing:-0.792px;color:#000;">Desenha</span>
<div style="left:1048px;top:529px;width:860px;height:30px;background:#f1f1f1;"></div>
<div style="left:1104px;top:531px;width:10px;height:26px;background:#fff;"></div>
<div style="left:1249px;top:531px;width:10px;height:26px;background:#fff;"></div>
<div style="left:1448px;top:531px;width:458px;height:26px;background:#fff;"></div>
<div style="left:1106px;top:534px;width:1px;height:20px;background:#555;"></div>
<div style="left:1251px;top:534px;width:1px;height:20px;background:#555;"></div>
<svg style="left:1052px;top:534px;" width="22" height="22" viewBox="0 0 22 22"><path d="M17 17 C17 10 13 8 8 8 V4 L1.5 9.5 L8 15 V11.5 C12 11.5 15 12 17 17Z" fill="#111"/></svg>
<svg style="left:1078.5px;top:534px;" width="22" height="22" viewBox="0 0 22 22"><path d="M5 17 C5 10 9 8 14 8 V4 L20.5 9.5 L14 15 V11.5 C10 11.5 7 12 5 17Z" fill="#111"/></svg>
<svg style="left:1115.5px;top:534px;" width="22" height="22" viewBox="0 0 22 22"><path d="M11 2 V20 M2 11 H20" stroke="#3a3a3a" stroke-width="1.5"/><path d="M11 1 L14 5 H8Z M11 21 L14 17 H8Z M1 11 L5 8 V14Z M21 11 L17 8 V14Z" fill="#3a3a3a"/></svg>
<svg style="left:1143px;top:534px;" width="22" height="22" viewBox="0 0 22 22"><circle cx="5" cy="5" r="3.4" fill="none" stroke="#3a3a3a" stroke-width="1.3"/><path d="M10 4 H16 V9" fill="none" stroke="#3a3a3a" stroke-width="1.3"/><path d="M16 11 L13.5 7.5 H18.5Z" fill="#3a3a3a"/><circle cx="8" cy="16" r="3.6" fill="none" stroke="#2f86e0" stroke-width="1.4"/><circle cx="15" cy="16" r="3.6" fill="none" stroke="#2f86e0" stroke-width="1.4"/></svg>
<svg style="left:1170px;top:534px;" width="22" height="22" viewBox="0 0 22 22"><path d="M14 4.5 A8 8 0 1 0 19 11" fill="none" stroke="#3a3a3a" stroke-width="1.5"/><path d="M12.5 0.5 L17.5 4.5 L12.5 8.5Z" fill="#3a3a3a"/></svg>
<svg style="left:1197.5px;top:534px;" width="22" height="22" viewBox="0 0 22 22"><path d="M2 6 V1.5 H20 V20 H15.5" fill="none" stroke="#2f86e0" stroke-width="1.5"/><rect x="2" y="9" width="10.5" height="10.5" fill="none" stroke="#3a3a3a" stroke-width="1.4"/></svg>
<svg style="left:1224px;top:534px;" width="22" height="22" viewBox="0 0 22 22"><path d="M8 14 L17 2 L21 5.5 L12.5 17Z" fill="#f2b04a"/><path d="M8 14 L12.5 17 L8.5 19.5 L4 18Z" fill="#e33"/><path d="M2 20.5 H5 M12 20.5 H21" stroke="#2f86e0" stroke-width="1.3"/></svg>
<svg style="left:1261.5px;top:534px;" width="22" height="22" viewBox="0 0 22 22"><path d="M3 19 L19 3" stroke="#3a3a3a" stroke-width="1.3"/><circle cx="3" cy="19" r="1.6" fill="#2f86e0"/><circle cx="19.5" cy="2.5" r="1.3" fill="#2f86e0"/></svg>
<svg style="left:1287.5px;top:534px;" width="22" height="22" viewBox="0 0 22 22"><circle cx="11" cy="11" r="9.5" fill="none" stroke="#3a3a3a" stroke-width="1.3"/><circle cx="11" cy="12" r="1.4" fill="#2f86e0"/><path d="M13 9 L17 5" stroke="#2f86e0" stroke-width="1.3"/><path d="M18 4 L17.5 8 L14 4.5Z" fill="#2f86e0"/></svg>
<svg style="left:1315px;top:534px;" width="22" height="22" viewBox="0 0 22 22"><path d="M3.5 20 L10 2 H12 L18.5 20 H16 L14.2 14.5 H7.8 L6 20Z M8.5 12.5 H13.5 L11 4.8Z" fill="#3a3a3a"/></svg>
<svg style="left:1342px;top:534px;" width="22" height="22" viewBox="0 0 22 22"><path d="M10 1 H18 L21 4 V13 H10Z" fill="#4a90e0"/><path d="M5 5 H13 V12 H5Z" fill="#7db3ee"/><path d="M1.5 9.5 H12 V17.5 H1.5Z M3 17.5 V20" fill="none" stroke="#3a3a3a" stroke-width="1.3"/><circle cx="13" cy="17.5" r="3.4" fill="none" stroke="#3a3a3a" stroke-width="1.2"/></svg>
<svg style="left:1368.5px;top:534px;" width="22" height="22" viewBox="0 0 22 22"><path d="M1.5 2.5 H10 L19 11.5 L11 19.5 L1.5 10.5Z" fill="none" stroke="#3a3a3a" stroke-width="1.3"/><circle cx="5.5" cy="6.5" r="1.5" fill="none" stroke="#3a3a3a"/><path d="M10 13 L18 4 L20.5 6 L12.5 15 L9.5 16Z" fill="#f2c24a"/><path d="M18 4 L19.5 2.2 L22 4.3 L20.5 6Z" fill="#e33"/></svg>
<svg style="left:1396px;top:534px;" width="22" height="22" viewBox="0 0 22 22"><circle cx="11" cy="11" r="10" fill="#ccc"/><path d="M11 11 L11 1 A10 10 0 0 1 19.7 6Z" fill="#f39c12"/><path d="M11 11 L19.7 6 A10 10 0 0 1 19.7 16Z" fill="#e74c3c"/><path d="M11 11 L19.7 16 A10 10 0 0 1 11 21Z" fill="#8e44ad"/><path d="M11 11 L11 21 A10 10 0 0 1 2.3 16Z" fill="#3b7be0"/><path d="M11 11 L2.3 16 A10 10 0 0 1 2.3 6Z" fill="#17b8a6"/><path d="M11 11 L2.3 6 A10 10 0 0 1 11 1Z" fill="#7bc043"/></svg>
<svg style="left:1423px;top:534px;" width="22" height="22" viewBox="0 0 22 22"><path d="M2 6 L8 2 H19 L13 6Z M1 10 H9 M1 13.5 H9 M1 17 H9" fill="none" stroke="#3a3a3a" stroke-width="1.2"/><rect x="11.5" y="7.5" width="8.5" height="13" fill="#fff" stroke="#3a3a3a" stroke-width="1.2"/><rect x="13.5" y="9.5" width="4.5" height="3" fill="#2f86e0"/><path d="M13.5 16 H18 M15.7 14 V18" stroke="#3a3a3a"/></svg>
<div style="left:1044px;top:980px;width:867px;height:25px;background:#f0f0f0;border-top:1px solid #d4d4d4;"></div>
<span class="t" style="left:1045.5px;top:986.88px;font-size:15.5px;letter-spacing:-0.639px;color:#000;">230.04, 2119.27</span>
<div style="left:1168px;top:982px;width:1px;height:23px;background:#d0d0d0;"></div>
<span class="t" style="left:1172.9px;top:986.88px;font-size:15.5px;letter-spacing:-0.236px;color:#000;">Selecionar o ponto de inserção da tabela:</span>
<svg style="left:1896px;top:991px;" width="13" height="13" viewBox="0 0 13 13"><rect x="9" y="1" width="2.6" height="2.6" fill="#b8b8b8"/><rect x="5" y="5" width="2.6" height="2.6" fill="#b8b8b8"/><rect x="9" y="5" width="2.6" height="2.6" fill="#b8b8b8"/><rect x="1" y="9" width="2.6" height="2.6" fill="#b8b8b8"/><rect x="5" y="9" width="2.6" height="2.6" fill="#b8b8b8"/><rect x="9" y="9" width="2.6" height="2.6" fill="#b8b8b8"/></svg>
<div style="left:1044px;top:601px;width:867px;height:379px;background:#000;"></div>
<svg style="left:1044px;top:601px;" width="867" height="379" viewBox="1044 601 867 379"><path d="M1106.0 601.0 L1106.0 801.4" fill="none" stroke="#e06a00" stroke-width="2"/><path d="M1105.0 801.4 L1814.0 801.4" fill="none" stroke="#e06a00" stroke-width="2"/><path d="M1813.0 601.0 L1813.0 801.4" fill="none" stroke="#e06a00" stroke-width="2"/><rect x="1120.2" y="874.7" width="72.2" height="89.4" fill="none" stroke="#e06a00" stroke-width="1.6"/><path d="M1114.0 601.0 L1114.0 794.6" fill="none" stroke="#8a8a8a" stroke-width="2.1"/><path d="M1113.2 794.4 L1272.0 794.4" fill="none" stroke="#8a8a8a" stroke-width="2.1"/><path d="M1272.0 794.2 L1561.0 794.2" fill="none" stroke="#8a8a8a" stroke-width="2.2"/><path d="M1808.4 601.0 L1808.4 794.6" fill="none" stroke="#8a8a8a" stroke-width="2.1"/><path d="M1576.0 794.2 L1809.0 794.2" fill="none" stroke="#8a8a8a" stroke-width="2"/><path d="M1171.5 651.0 L1171.5 662.0" fill="none" stroke="#8a8a8a" stroke-width="2.1"/><path d="M1171.5 670.0 L1171.5 689.0" fill="none" stroke="#8a8a8a" stroke-width="2.1"/><path d="M1171.5 697.0 L1171.5 733.0" fill="none" stroke="#8a8a8a" stroke-width="2.1"/><path d="M1171.0 651.0 L1232.0 651.0" fill="none" stroke="#8a8a8a" stroke-width="2.1"/><path d="M1241.0 651.0 L1252.0 651.0" fill="none" stroke="#8a8a8a" stroke-width="2.1"/><path d="M1217.0 646.0 L1217.0 707.0" fill="none" stroke="#8a8a8a" stroke-width="2.1"/><path d="M1171.0 684.6 L1216.0 684.6" fill="none" stroke="#8a8a8a" stroke-width="2.1"/><path d="M1171.0 708.0 L1225.5 708.0" fill="none" stroke="#8a8a8a" stroke-width="2.1"/><path d="M1225.5 699.6 L1225.5 732.7" fill="none" stroke="#8a8a8a" stroke-width="2.1"/><path d="M1225.5 699.6 L1252.0 699.6" fill="none" stroke="#8a8a8a" stroke-width="2.1"/><path d="M1252.2 645.0 L1252.2 700.6" fill="none" stroke="#8a8a8a" stroke-width="2.1"/><path d="M1252.2 706.0 L1252.2 736.0" fill="none" stroke="#8a8a8a" stroke-width="2.1"/><path d="M1171.0 732.7 L1193.0 732.7" fill="none" stroke="#8a8a8a" stroke-width="2.1"/><path d="M1202.0 732.7 L1252.0 732.7" fill="none" stroke="#8a8a8a" stroke-width="2.1"/><path d="M1226.0 640.0 L1226.0 651.0" fill="none" stroke="#8a8a8a" stroke-width="1"/><path d="M1212.2 601.0 L1212.2 631.0" fill="none" stroke="#8a8a8a" stroke-width="4"/><path d="M1226.6 601.0 L1226.6 636.6" fill="none" stroke="#8a8a8a" stroke-width="2.1"/><path d="M1252.2 601.0 L1252.2 636.6" fill="none" stroke="#8a8a8a" stroke-width="2.1"/><path d="M1226.6 631.0 L1236.0 631.0" fill="none" stroke="#8a8a8a" stroke-width="2.1"/><path d="M1241.0 631.0 L1252.0 631.0" fill="none" stroke="#8a8a8a" stroke-width="2.1"/><path d="M1213.0 603.0 L1226.0 603.0" fill="none" stroke="#8a8a8a" stroke-width="2.1"/><path d="M1222.0 603.0 L1222.0 622.0" fill="none" stroke="#8a8a8a" stroke-width="1"/><path d="M1190 601 C1188 612 1196 612 1196 620 C1196 628 1188 624 1190 632 C1193 636 1199 634 1203 634 M1195 601 C1194 610 1201 611 1201 619 C1201 626 1196 626 1203 628" fill="none" stroke="#8a8a8a" stroke-width="2.6"/><circle cx="1201.5" cy="605" r="2.1" fill="#8a8a8a"/><circle cx="1201.5" cy="612" r="2.1" fill="#8a8a8a"/><circle cx="1201.5" cy="619" r="2.1" fill="#8a8a8a"/><rect x="1244.0" y="625.0" width="5.0" height="5.0" fill="none" stroke="#8a8a8a" stroke-width="1"/><rect x="1244.0" y="606.0" width="5.0" height="6.0" fill="none" stroke="#8a8a8a" stroke-width="1"/><rect x="1234.0" y="700.5" width="8.0" height="2.5" fill="none" stroke="#8a8a8a" stroke-width="1"/><rect x="1232.0" y="713.0" width="11.0" height="5.0" fill="none" stroke="#8a8a8a" stroke-width="1"/><path d="M1229.0 725.0 L1239.0 725.0" fill="none" stroke="#8a8a8a" stroke-width="1"/><path d="M1248.0 716.0 L1248.0 730.0" fill="none" stroke="#8a8a8a" stroke-width="1.2"/><rect x="1227.0" y="717.0" width="4.0" height="6.0" fill="none" stroke="#8a8a8a" stroke-width="1"/><rect x="1227.0" y="726.0" width="4.0" height="5.0" fill="none" stroke="#8a8a8a" stroke-width="1"/><rect x="1122.0" y="649.4" width="28.8" height="4.3" fill="none" stroke="#8a8a8a" stroke-width="0.9"/><path d="M1122.8 653.7 L1125.3 649.4" stroke="#8a8a8a" stroke-width="0.7"/><path d="M1126.9 653.7 L1129.4 649.4" stroke="#8a8a8a" stroke-width="0.7"/><path d="M1131.1 653.7 L1133.6 649.4" stroke="#8a8a8a" stroke-width="0.7"/><path d="M1135.2 653.7 L1137.7 649.4" stroke="#8a8a8a" stroke-width="0.7"/><path d="M1139.3 653.7 L1141.8 649.4" stroke="#8a8a8a" stroke-width="0.7"/><path d="M1143.4 653.7 L1145.9 649.4" stroke="#8a8a8a" stroke-width="0.7"/><path d="M1147.5 653.7 L1150.0 649.4" stroke="#8a8a8a" stroke-width="0.7"/><rect x="1127.0" y="660.0" width="6" height="12" rx="1.5" fill="none" stroke="#8a8a8a" stroke-width="1"/><path d="M1125.0 664.0 V668.0 M1135.0 664.0 V668.0" stroke="#8a8a8a" stroke-width="1.4"/><rect x="1131.0" y="686.0" width="14.0" height="12.0" fill="none" stroke="#8a8a8a" stroke-width="1"/><circle cx="1133" cy="684.5" r="1.6" fill="none" stroke="#8a8a8a" stroke-width="0.8"/><circle cx="1133" cy="699.5" r="1.6" fill="none" stroke="#8a8a8a" stroke-width="0.8"/><circle cx="1138" cy="684.5" r="1.6" fill="none" stroke="#8a8a8a" stroke-width="0.8"/><circle cx="1138" cy="699.5" r="1.6" fill="none" stroke="#8a8a8a" stroke-width="0.8"/><circle cx="1143" cy="684.5" r="1.6" fill="none" stroke="#8a8a8a" stroke-width="0.8"/><circle cx="1143" cy="699.5" r="1.6" fill="none" stroke="#8a8a8a" stroke-width="0.8"/><circle cx="1129" cy="692" r="1.6" fill="none" stroke="#8a8a8a" stroke-width="0.8"/><circle cx="1147" cy="692" r="1.6" fill="none" stroke="#8a8a8a" stroke-width="0.8"/><rect x="1122.0" y="702.3" width="35.2" height="4.3" fill="none" stroke="#8a8a8a" stroke-width="0.9"/><path d="M1122.9 706.6 L1125.4 702.3" stroke="#8a8a8a" stroke-width="0.7"/><path d="M1127.3 706.6 L1129.8 702.3" stroke="#8a8a8a" stroke-width="0.7"/><path d="M1131.7 706.6 L1134.2 702.3" stroke="#8a8a8a" stroke-width="0.7"/><path d="M1136.1 706.6 L1138.6 702.3" stroke="#8a8a8a" stroke-width="0.7"/><path d="M1140.5 706.6 L1143.0 702.3" stroke="#8a8a8a" stroke-width="0.7"/><path d="M1144.9 706.6 L1147.4 702.3" stroke="#8a8a8a" stroke-width="0.7"/><path d="M1149.3 706.6 L1151.8 702.3" stroke="#8a8a8a" stroke-width="0.7"/><path d="M1153.7 706.6 L1156.2 702.3" stroke="#8a8a8a" stroke-width="0.7"/><rect x="1156.3" y="707.5" width="4.5" height="7.7" fill="none" stroke="#8a8a8a" stroke-width="1"/><rect x="1156.3" y="729.5" width="4.5" height="7.5" fill="none" stroke="#8a8a8a" stroke-width="1"/><rect x="1127.0" y="717.0" width="6" height="12" rx="1.5" fill="none" stroke="#8a8a8a" stroke-width="1"/><path d="M1125.0 721.0 V725.0 M1135.0 721.0 V725.0" stroke="#8a8a8a" stroke-width="1.4"/><rect x="1127.0" y="736.3" width="21.6" height="4.3" fill="none" stroke="#8a8a8a" stroke-width="0.9"/><path d="M1127.9 740.6 L1130.4 736.3" stroke="#8a8a8a" stroke-width="0.7"/><path d="M1132.2 740.6 L1134.7 736.3" stroke="#8a8a8a" stroke-width="0.7"/><path d="M1136.5 740.6 L1139.0 736.3" stroke="#8a8a8a" stroke-width="0.7"/><path d="M1140.8 740.6 L1143.3 736.3" stroke="#8a8a8a" stroke-width="0.7"/><path d="M1145.1 740.6 L1147.6 736.3" stroke="#8a8a8a" stroke-width="0.7"/><rect x="1184.5" y="651.8" width="28.5" height="3.8" fill="none" stroke="#8a8a8a" stroke-width="0.9"/><path d="M1185.3 655.6 L1187.8 651.8" stroke="#8a8a8a" stroke-width="0.7"/><path d="M1189.4 655.6 L1191.9 651.8" stroke="#8a8a8a" stroke-width="0.7"/><path d="M1193.5 655.6 L1196.0 651.8" stroke="#8a8a8a" stroke-width="0.7"/><path d="M1197.5 655.6 L1200.0 651.8" stroke="#8a8a8a" stroke-width="0.7"/><path d="M1201.6 655.6 L1204.1 651.8" stroke="#8a8a8a" stroke-width="0.7"/><path d="M1205.7 655.6 L1208.2 651.8" stroke="#8a8a8a" stroke-width="0.7"/><path d="M1209.7 655.6 L1212.2 651.8" stroke="#8a8a8a" stroke-width="0.7"/><rect x="1189.0" y="680.4" width="27.0" height="3.6" fill="none" stroke="#8a8a8a" stroke-width="0.9"/><path d="M1189.9 684.0 L1192.4 680.4" stroke="#8a8a8a" stroke-width="0.7"/><path d="M1194.4 684.0 L1196.9 680.4" stroke="#8a8a8a" stroke-width="0.7"/><path d="M1198.9 684.0 L1201.4 680.4" stroke="#8a8a8a" stroke-width="0.7"/><path d="M1203.4 684.0 L1205.9 680.4" stroke="#8a8a8a" stroke-width="0.7"/><path d="M1207.9 684.0 L1210.4 680.4" stroke="#8a8a8a" stroke-width="0.7"/><path d="M1212.4 684.0 L1214.9 680.4" stroke="#8a8a8a" stroke-width="0.7"/><rect x="1182.0" y="705.0" width="34.0" height="3.5" fill="none" stroke="#8a8a8a" stroke-width="0.9"/><path d="M1182.8 708.5 L1185.3 705.0" stroke="#8a8a8a" stroke-width="0.7"/><path d="M1187.1 708.5 L1189.6 705.0" stroke="#8a8a8a" stroke-width="0.7"/><path d="M1191.3 708.5 L1193.8 705.0" stroke="#8a8a8a" stroke-width="0.7"/><path d="M1195.6 708.5 L1198.1 705.0" stroke="#8a8a8a" stroke-width="0.7"/><path d="M1199.8 708.5 L1202.3 705.0" stroke="#8a8a8a" stroke-width="0.7"/><path d="M1204.1 708.5 L1206.6 705.0" stroke="#8a8a8a" stroke-width="0.7"/><path d="M1208.3 708.5 L1210.8 705.0" stroke="#8a8a8a" stroke-width="0.7"/><path d="M1212.6 708.5 L1215.1 705.0" stroke="#8a8a8a" stroke-width="0.7"/><rect x="1204.0" y="690.0" width="6" height="12" rx="1.5" fill="none" stroke="#8a8a8a" stroke-width="1"/><path d="M1202.0 694.0 V698.0 M1212.0 694.0 V698.0" stroke="#8a8a8a" stroke-width="1.4"/><rect x="1178.0" y="712.0" width="6" height="12" rx="1.5" fill="none" stroke="#8a8a8a" stroke-width="1"/><path d="M1176.0 716.0 V720.0 M1186.0 716.0 V720.0" stroke="#8a8a8a" stroke-width="1.4"/><rect x="1213.0" y="712.0" width="6" height="12" rx="1.5" fill="none" stroke="#8a8a8a" stroke-width="1"/><path d="M1211.0 716.0 V720.0 M1221.0 716.0 V720.0" stroke="#8a8a8a" stroke-width="1.4"/><rect x="1172.0" y="728.0" width="14.0" height="4.0" fill="none" stroke="#8a8a8a" stroke-width="0.9"/><path d="M1172.9 732.0 L1175.4 728.0" stroke="#8a8a8a" stroke-width="0.7"/><path d="M1177.6 732.0 L1180.1 728.0" stroke="#8a8a8a" stroke-width="0.7"/><path d="M1182.3 732.0 L1184.8 728.0" stroke="#8a8a8a" stroke-width="0.7"/><rect x="1216.0" y="728.0" width="9.0" height="4.0" fill="none" stroke="#8a8a8a" stroke-width="0.9"/><path d="M1216.9 732.0 L1219.4 728.0" stroke="#8a8a8a" stroke-width="0.7"/><path d="M1221.4 732.0 L1223.9 728.0" stroke="#8a8a8a" stroke-width="0.7"/><path d="M1115.0 743.8 L1195.5 743.8" fill="none" stroke="#f00000" stroke-width="2"/><path d="M1194.5 743.8 L1194.5 780.0" fill="none" stroke="#f00000" stroke-width="2"/><path d="M1122.0 780.0 L1184.0 780.0" fill="none" stroke="#f00000" stroke-width="2.2"/><path d="M1190.3 780.0 L1253.0 780.0" fill="none" stroke="#f00000" stroke-width="2.2"/><path d="M1123.0 761.5 L1123.0 793.5" fill="none" stroke="#f00000" stroke-width="2"/><path d="M1122.0 761.5 L1153.0 761.5" fill="none" stroke="#f00000" stroke-width="2.4"/><path d="M1252.2 774.3 L1252.2 794.6" fill="none" stroke="#f00000" stroke-width="2"/><path d="M1115.5 773.0 L1115.5 793.5" fill="none" stroke="#f00000" stroke-width="1.4"/><path d="M1115.5 793.0 L1131.5 793.0" fill="none" stroke="#f00000" stroke-width="1.6"/><path d="M1160.8 728.4 L1160.8 743.8" fill="none" stroke="#f00000" stroke-width="1.4"/><path d="M1275.1 601.0 L1275.1 905.5" fill="none" stroke="#00e400" stroke-width="2"/><path d="M1280.1 807.5 L1280.1 909.2" fill="none" stroke="#00e400" stroke-width="1.6"/><path d="M1209.5 905.5 L1275.1 905.5" fill="none" stroke="#00e400" stroke-width="1.6"/><path d="M1192.0 909.2 L1207.3 909.2" fill="none" stroke="#00e400" stroke-width="1.6"/><path d="M1208.4 909.2 L1280.1 909.2" fill="none" stroke="#00e400" stroke-width="1.6"/><path d="M1206.6 900.5 L1206.6 909.2" fill="none" stroke="#00e400" stroke-width="1.2"/><path d="M1209.5 900.5 L1209.5 909.2" fill="none" stroke="#00e400" stroke-width="1.2"/><path d="M1283.4 801.0 L1283.4 807.5" fill="none" stroke="#00e400" stroke-width="1.2"/><path d="M1099.0 801.2 L1106.0 801.2" fill="none" stroke="#00e400" stroke-width="1"/><path d="M1813.0 801.5 L1824.0 801.5" fill="none" stroke="#00e400" stroke-width="1.4"/><path d="M1272.0 601.0 L1272.0 719.0" fill="none" stroke="#8a8a8a" stroke-width="2.1"/><path d="M1272.0 725.0 L1272.0 754.0" fill="none" stroke="#8a8a8a" stroke-width="2.1"/><path d="M1272.0 760.0 L1272.0 776.0" fill="none" stroke="#8a8a8a" stroke-width="2.1"/><path d="M1272.0 782.0 L1272.0 795.0" fill="none" stroke="#8a8a8a" stroke-width="2.1"/><path d="M1327.0 601.0 L1327.0 702.5" fill="none" stroke="#8a8a8a" stroke-width="2.1"/><path d="M1358.6 601.0 L1358.6 702.5" fill="none" stroke="#8a8a8a" stroke-width="2.1"/><path d="M1275.0 710.2 L1561.0 710.2" fill="none" stroke="#8a8a8a" stroke-width="2.2"/><path d="M1275.0 732.7 L1360.0 732.7" fill="none" stroke="#8a8a8a" stroke-width="2.2"/><path d="M1375.5 732.7 L1474.3 732.7" fill="none" stroke="#8a8a8a" stroke-width="2.2"/><path d="M1490.0 732.7 L1561.0 732.7" fill="none" stroke="#8a8a8a" stroke-width="2.2"/><path d="M1296.7 732.7 L1296.7 794.0" fill="none" stroke="#8a8a8a" stroke-width="2.1"/><path d="M1534.0 732.7 L1534.0 794.0" fill="none" stroke="#8a8a8a" stroke-width="2.1"/><path d="M1264.0 772.8 L1296.7 772.8" fill="none" stroke="#8a8a8a" stroke-width="2.1"/><path d="M1281.0 746.0 L1295.0 746.0" fill="none" stroke="#8a8a8a" stroke-width="1"/><path d="M1284.0 760.0 L1284.0 772.0" fill="none" stroke="#8a8a8a" stroke-width="1.2"/><path d="M1290.0 760.0 L1290.0 772.0" fill="none" stroke="#8a8a8a" stroke-width="1.2"/><circle cx="1285.5" cy="740.5" r="3.6" fill="#ddd" stroke="#fff" stroke-width="1"/><circle cx="1547.5" cy="783.5" r="3.6" fill="#ddd" stroke="#fff" stroke-width="1"/><rect x="1386.8" y="678.9" width="7.5" height="5.1" fill="none" stroke="#8a8a8a" stroke-width="1"/><rect x="1459.4" y="678.9" width="7.9" height="5.1" fill="none" stroke="#8a8a8a" stroke-width="1"/><rect x="1340.2" y="748.5" width="12.0" height="37.5" fill="none" stroke="#8a8a8a" stroke-width="1.1"/><path d="M1346.2 748.5 L1346.2 786.0" fill="none" stroke="#8a8a8a" stroke-width="1"/><path d="M1337.2 761.0 L1355.2 761.0" fill="none" stroke="#8a8a8a" stroke-width="1"/><path d="M1337.2 774.0 L1355.2 774.0" fill="none" stroke="#8a8a8a" stroke-width="1"/><path d="M1340.2 767.5 L1352.2 767.5" fill="none" stroke="#8a8a8a" stroke-width="1"/><path d="M1335.2 755 l3.3 -3.3 l3.3 3.3 l-3.3 3.3Z M1357.2 755 l-3.3 -3.3 l-3.3 3.3 l3.3 3.3Z" fill="#8a8a8a"/><path d="M1335.2 767.5 l3.3 -3.3 l3.3 3.3 l-3.3 3.3Z M1357.2 767.5 l-3.3 -3.3 l-3.3 3.3 l3.3 3.3Z" fill="#8a8a8a"/><path d="M1335.2 780.5 l3.3 -3.3 l3.3 3.3 l-3.3 3.3Z M1357.2 780.5 l-3.3 -3.3 l-3.3 3.3 l3.3 3.3Z" fill="#8a8a8a"/><rect x="1381.4" y="748.5" width="12.0" height="37.5" fill="none" stroke="#8a8a8a" stroke-width="1.1"/><path d="M1387.4 748.5 L1387.4 786.0" fill="none" stroke="#8a8a8a" stroke-width="1"/><path d="M1378.4 761.0 L1396.4 761.0" fill="none" stroke="#8a8a8a" stroke-width="1"/><path d="M1378.4 774.0 L1396.4 774.0" fill="none" stroke="#8a8a8a" stroke-width="1"/><path d="M1381.4 767.5 L1393.4 767.5" fill="none" stroke="#8a8a8a" stroke-width="1"/><path d="M1376.4 755 l3.3 -3.3 l3.3 3.3 l-3.3 3.3Z M1398.4 755 l-3.3 -3.3 l-3.3 3.3 l3.3 3.3Z" fill="#8a8a8a"/><path d="M1376.4 767.5 l3.3 -3.3 l3.3 3.3 l-3.3 3.3Z M1398.4 767.5 l-3.3 -3.3 l-3.3 3.3 l3.3 3.3Z" fill="#8a8a8a"/><path d="M1376.4 780.5 l3.3 -3.3 l3.3 3.3 l-3.3 3.3Z M1398.4 780.5 l-3.3 -3.3 l-3.3 3.3 l3.3 3.3Z" fill="#8a8a8a"/><rect x="1422.8" y="748.5" width="12.0" height="37.5" fill="none" stroke="#8a8a8a" stroke-width="1.1"/><path d="M1428.8 748.5 L1428.8 786.0" fill="none" stroke="#8a8a8a" stroke-width="1"/><path d="M1419.8 761.0 L1437.8 761.0" fill="none" stroke="#8a8a8a" stroke-width="1"/><path d="M1419.8 774.0 L1437.8 774.0" fill="none" stroke="#8a8a8a" stroke-width="1"/><path d="M1422.8 767.5 L1434.8 767.5" fill="none" stroke="#8a8a8a" stroke-width="1"/><path d="M1417.8 755 l3.3 -3.3 l3.3 3.3 l-3.3 3.3Z M1439.8 755 l-3.3 -3.3 l-3.3 3.3 l3.3 3.3Z" fill="#8a8a8a"/><path d="M1417.8 767.5 l3.3 -3.3 l3.3 3.3 l-3.3 3.3Z M1439.8 767.5 l-3.3 -3.3 l-3.3 3.3 l3.3 3.3Z" fill="#8a8a8a"/><path d="M1417.8 780.5 l3.3 -3.3 l3.3 3.3 l-3.3 3.3Z M1439.8 780.5 l-3.3 -3.3 l-3.3 3.3 l3.3 3.3Z" fill="#8a8a8a"/><rect x="1464.5" y="748.5" width="12.0" height="37.5" fill="none" stroke="#8a8a8a" stroke-width="1.1"/><path d="M1470.5 748.5 L1470.5 786.0" fill="none" stroke="#8a8a8a" stroke-width="1"/><path d="M1461.5 761.0 L1479.5 761.0" fill="none" stroke="#8a8a8a" stroke-width="1"/><path d="M1461.5 774.0 L1479.5 774.0" fill="none" stroke="#8a8a8a" stroke-width="1"/><path d="M1464.5 767.5 L1476.5 767.5" fill="none" stroke="#8a8a8a" stroke-width="1"/><path d="M1459.5 755 l3.3 -3.3 l3.3 3.3 l-3.3 3.3Z M1481.5 755 l-3.3 -3.3 l-3.3 3.3 l3.3 3.3Z" fill="#8a8a8a"/><path d="M1459.5 767.5 l3.3 -3.3 l3.3 3.3 l-3.3 3.3Z M1481.5 767.5 l-3.3 -3.3 l-3.3 3.3 l3.3 3.3Z" fill="#8a8a8a"/><path d="M1459.5 780.5 l3.3 -3.3 l3.3 3.3 l-3.3 3.3Z M1481.5 780.5 l-3.3 -3.3 l-3.3 3.3 l3.3 3.3Z" fill="#8a8a8a"/><rect x="1328.5" y="787.8" width="55.1" height="3.8" fill="none" stroke="#8a8a8a" stroke-width="0.9"/><path d="M1329.3 791.6 L1331.8 787.8" stroke="#8a8a8a" stroke-width="0.7"/><path d="M1333.6 791.6 L1336.1 787.8" stroke="#8a8a8a" stroke-width="0.7"/><path d="M1337.8 791.6 L1340.3 787.8" stroke="#8a8a8a" stroke-width="0.7"/><path d="M1342.1 791.6 L1344.6 787.8" stroke="#8a8a8a" stroke-width="0.7"/><path d="M1346.3 791.6 L1348.8 787.8" stroke="#8a8a8a" stroke-width="0.7"/><path d="M1350.5 791.6 L1353.0 787.8" stroke="#8a8a8a" stroke-width="0.7"/><path d="M1354.8 791.6 L1357.3 787.8" stroke="#8a8a8a" stroke-width="0.7"/><path d="M1359.0 791.6 L1361.5 787.8" stroke="#8a8a8a" stroke-width="0.7"/><path d="M1363.3 791.6 L1365.8 787.8" stroke="#8a8a8a" stroke-width="0.7"/><path d="M1367.5 791.6 L1370.0 787.8" stroke="#8a8a8a" stroke-width="0.7"/><path d="M1371.7 791.6 L1374.2 787.8" stroke="#8a8a8a" stroke-width="0.7"/><path d="M1376.0 791.6 L1378.5 787.8" stroke="#8a8a8a" stroke-width="0.7"/><path d="M1380.2 791.6 L1382.7 787.8" stroke="#8a8a8a" stroke-width="0.7"/><rect x="1397.5" y="787.8" width="20.7" height="3.8" fill="none" stroke="#8a8a8a" stroke-width="0.9"/><path d="M1398.3 791.6 L1400.8 787.8" stroke="#8a8a8a" stroke-width="0.7"/><path d="M1402.5 791.6 L1405.0 787.8" stroke="#8a8a8a" stroke-width="0.7"/><path d="M1406.6 791.6 L1409.1 787.8" stroke="#8a8a8a" stroke-width="0.7"/><path d="M1410.7 791.6 L1413.2 787.8" stroke="#8a8a8a" stroke-width="0.7"/><path d="M1414.9 791.6 L1417.4 787.8" stroke="#8a8a8a" stroke-width="0.7"/><rect x="1432.7" y="787.8" width="20.3" height="3.8" fill="none" stroke="#8a8a8a" stroke-width="0.9"/><path d="M1433.5 791.6 L1436.0 787.8" stroke="#8a8a8a" stroke-width="0.7"/><path d="M1437.6 791.6 L1440.1 787.8" stroke="#8a8a8a" stroke-width="0.7"/><path d="M1441.6 791.6 L1444.1 787.8" stroke="#8a8a8a" stroke-width="0.7"/><path d="M1445.7 791.6 L1448.2 787.8" stroke="#8a8a8a" stroke-width="0.7"/><path d="M1449.8 791.6 L1452.3 787.8" stroke="#8a8a8a" stroke-width="0.7"/><rect x="1466.9" y="787.8" width="34.6" height="3.8" fill="none" stroke="#8a8a8a" stroke-width="0.9"/><path d="M1467.8 791.6 L1470.3 787.8" stroke="#8a8a8a" stroke-width="0.7"/><path d="M1472.1 791.6 L1474.6 787.8" stroke="#8a8a8a" stroke-width="0.7"/><path d="M1476.4 791.6 L1478.9 787.8" stroke="#8a8a8a" stroke-width="0.7"/><path d="M1480.7 791.6 L1483.2 787.8" stroke="#8a8a8a" stroke-width="0.7"/><path d="M1485.1 791.6 L1487.6 787.8" stroke="#8a8a8a" stroke-width="0.7"/><path d="M1489.4 791.6 L1491.9 787.8" stroke="#8a8a8a" stroke-width="0.7"/><path d="M1493.7 791.6 L1496.2 787.8" stroke="#8a8a8a" stroke-width="0.7"/><path d="M1498.0 791.6 L1500.5 787.8" stroke="#8a8a8a" stroke-width="0.7"/><rect x="1387.5" y="788.0" width="7.0" height="6.0" fill="none" stroke="#8a8a8a" stroke-width="1"/><rect x="1460.0" y="788.0" width="7.0" height="6.0" fill="none" stroke="#8a8a8a" stroke-width="1"/><rect x="1299.5" y="750.0" width="13.5" height="7.0" fill="none" stroke="#8a8a8a" stroke-width="1"/><rect x="1302.0" y="770.0" width="13.0" height="12.0" fill="none" stroke="#8a8a8a" stroke-width="1"/><rect x="1319.0" y="765.0" width="6" height="12" rx="1.5" fill="none" stroke="#8a8a8a" stroke-width="1"/><path d="M1317.0 769.0 V773.0 M1327.0 769.0 V773.0" stroke="#8a8a8a" stroke-width="1.4"/><path d="M1298.0 788.5 L1321.0 788.5" fill="none" stroke="#8a8a8a" stroke-width="1.6"/><rect x="1518.5" y="750.0" width="13.5" height="7.0" fill="none" stroke="#8a8a8a" stroke-width="1"/><rect x="1516.0" y="770.0" width="13.0" height="12.0" fill="none" stroke="#8a8a8a" stroke-width="1"/><rect x="1505.5" y="765.0" width="6" height="12" rx="1.5" fill="none" stroke="#8a8a8a" stroke-width="1"/><path d="M1503.5 769.0 V773.0 M1513.5 769.0 V773.0" stroke="#8a8a8a" stroke-width="1.4"/><path d="M1510.0 788.5 L1533.0 788.5" fill="none" stroke="#8a8a8a" stroke-width="1.6"/><rect x="1300.5" y="746.5" width="3.0" height="3.0" fill="none" stroke="#8a8a8a" stroke-width="0.8"/><rect x="1300.5" y="757.5" width="3.0" height="3.0" fill="none" stroke="#8a8a8a" stroke-width="0.8"/><rect x="1307.5" y="746.5" width="3.0" height="3.0" fill="none" stroke="#8a8a8a" stroke-width="0.8"/><rect x="1307.5" y="757.5" width="3.0" height="3.0" fill="none" stroke="#8a8a8a" stroke-width="0.8"/><rect x="1519.5" y="746.5" width="3.0" height="3.0" fill="none" stroke="#8a8a8a" stroke-width="0.8"/><rect x="1519.5" y="757.5" width="3.0" height="3.0" fill="none" stroke="#8a8a8a" stroke-width="0.8"/><rect x="1526.5" y="746.5" width="3.0" height="3.0" fill="none" stroke="#8a8a8a" stroke-width="0.8"/><rect x="1526.5" y="757.5" width="3.0" height="3.0" fill="none" stroke="#8a8a8a" stroke-width="0.8"/><path d="M1560.2 601.0 L1560.2 650.5" fill="none" stroke="#8a8a8a" stroke-width="2.4"/><path d="M1560.2 658.0 L1560.2 696.4" fill="none" stroke="#8a8a8a" stroke-width="2.4"/><path d="M1560.2 705.0 L1560.2 719.0" fill="none" stroke="#8a8a8a" stroke-width="2.4"/><path d="M1560.2 724.0 L1560.2 739.0" fill="none" stroke="#8a8a8a" stroke-width="2.4"/><path d="M1560.2 745.5 L1560.2 765.0" fill="none" stroke="#8a8a8a" stroke-width="2.4"/><path d="M1560.2 771.0 L1560.2 793.5" fill="none" stroke="#8a8a8a" stroke-width="2.4"/><path d="M1541.0 627.0 L1541.0 696.4" fill="none" stroke="#8a8a8a" stroke-width="2.1"/><path d="M1541.0 627.0 L1556.0 627.0" fill="none" stroke="#8a8a8a" stroke-width="2.1"/><path d="M1541.0 667.5 L1560.0 667.5" fill="none" stroke="#8a8a8a" stroke-width="2.1"/><rect x="1553.0" y="622.5" width="6.0" height="5.0" fill="none" stroke="#8a8a8a" stroke-width="1"/><path d="M1541.0 710.0 L1561.0 710.0" fill="none" stroke="#8a8a8a" stroke-width="1.2"/><path d="M1541.0 704.0 L1541.0 710.0" fill="none" stroke="#8a8a8a" stroke-width="2.1"/><path d="M1536.0 752.0 L1560.0 752.0" fill="none" stroke="#8a8a8a" stroke-width="1.2"/><path d="M1536.0 777.0 L1556.0 777.0" fill="none" stroke="#8a8a8a" stroke-width="1.2"/><path d="M1557.0 771.0 L1557.0 778.0" fill="none" stroke="#8a8a8a" stroke-width="2.1"/><path d="M1576.5 601.0 L1576.5 609.0" fill="none" stroke="#8a8a8a" stroke-width="2.1"/><path d="M1576.5 616.0 L1576.5 705.0" fill="none" stroke="#8a8a8a" stroke-width="2.1"/><path d="M1576.5 757.0 L1576.5 793.5" fill="none" stroke="#8a8a8a" stroke-width="2.1"/><path d="M1561.0 776.0 L1576.5 776.0" fill="none" stroke="#8a8a8a" stroke-width="1.2"/><path d="M1593.5 679.3 L1808.4 679.3" fill="none" stroke="#8a8a8a" stroke-width="2"/><path d="M1698.8 679.3 L1698.8 721.3" fill="none" stroke="#8a8a8a" stroke-width="2"/><path d="M1593.5 721.0 L1700.0 721.0" fill="none" stroke="#8a8a8a" stroke-width="2"/><path d="M1594.2 679.3 L1594.2 688.0" fill="none" stroke="#8a8a8a" stroke-width="2.1"/><path d="M1594.2 695.5 L1594.2 721.3" fill="none" stroke="#8a8a8a" stroke-width="2.1"/><path d="M1743.0 758.0 L1743.0 788.0" fill="none" stroke="#8a8a8a" stroke-width="1"/><rect x="1575.7" y="754.0" width="4.0" height="4.0" fill="none" stroke="#8a8a8a" stroke-width="0.8"/><rect x="1632.3" y="754.0" width="4.0" height="4.0" fill="none" stroke="#8a8a8a" stroke-width="0.8"/><rect x="1676.0" y="754.0" width="4.0" height="4.0" fill="none" stroke="#8a8a8a" stroke-width="0.8"/><rect x="1632.3" y="675.0" width="4.0" height="4.0" fill="none" stroke="#8a8a8a" stroke-width="0.8"/><rect x="1676.0" y="675.0" width="4.0" height="4.0" fill="none" stroke="#8a8a8a" stroke-width="0.8"/><rect x="1738.5" y="675.0" width="4.0" height="4.0" fill="none" stroke="#8a8a8a" stroke-width="0.8"/><rect x="1801.5" y="675.0" width="4.0" height="4.0" fill="none" stroke="#8a8a8a" stroke-width="0.8"/><rect x="1576.0" y="788.0" width="4.0" height="4.0" fill="none" stroke="#8a8a8a" stroke-width="0.8"/><rect x="1676.0" y="788.0" width="4.0" height="4.0" fill="none" stroke="#8a8a8a" stroke-width="0.8"/><rect x="1576.0" y="676.0" width="4.0" height="4.0" fill="none" stroke="#8a8a8a" stroke-width="0.8"/><rect x="1302.5" y="849.5" width="154.2" height="63.0" fill="none" stroke="#f2f200" stroke-width="1.4"/><path d="M1302.5 854.0 L1456.7 854.0" fill="none" stroke="#f2f200" stroke-width="1.5"/><path d="M1302.5 858.5 L1456.7 858.5" fill="none" stroke="#f2f200" stroke-width="1.5"/><path d="M1302.5 863.0 L1456.7 863.0" fill="none" stroke="#f2f200" stroke-width="1.5"/><path d="M1302.5 867.5 L1456.7 867.5" fill="none" stroke="#f2f200" stroke-width="1.5"/><path d="M1302.5 872.0 L1456.7 872.0" fill="none" stroke="#f2f200" stroke-width="1.5"/><path d="M1302.5 876.5 L1456.7 876.5" fill="none" stroke="#f2f200" stroke-width="1.5"/><path d="M1302.5 881.0 L1456.7 881.0" fill="none" stroke="#f2f200" stroke-width="1.5"/><path d="M1302.5 885.5 L1456.7 885.5" fill="none" stroke="#f2f200" stroke-width="1.5"/><path d="M1302.5 890.0 L1456.7 890.0" fill="none" stroke="#f2f200" stroke-width="1.5"/><path d="M1302.5 894.5 L1456.7 894.5" fill="none" stroke="#f2f200" stroke-width="1.5"/><path d="M1302.5 899.0 L1456.7 899.0" fill="none" stroke="#f2f200" stroke-width="1.5"/><path d="M1302.5 903.5 L1456.7 903.5" fill="none" stroke="#f2f200" stroke-width="1.5"/><path d="M1302.5 908.0 L1456.7 908.0" fill="none" stroke="#f2f200" stroke-width="1.5"/><path d="M1350.6 849.5 L1350.6 912.5" fill="none" stroke="#f2f200" stroke-width="1.5"/><path d="M1376.4 849.5 L1376.4 912.5" fill="none" stroke="#f2f200" stroke-width="1.5"/><path d="M1390.0 849.5 L1390.0 912.5" fill="none" stroke="#f2f200" stroke-width="1.5"/><path d="M1409.2 849.5 L1409.2 912.5" fill="none" stroke="#f2f200" stroke-width="1.5"/><text x="1304" y="853.2" font-size="3.8" fill="#00ffff" stroke="#00ffff" stroke-width="0.3" font-weight="bold" font-family="Liberation Sans,sans-serif" textLength="7.0" lengthAdjust="spacingAndGlyphs">Tipo</text><text x="1352" y="853.2" font-size="3.8" fill="#00ffff" stroke="#00ffff" stroke-width="0.3" font-weight="bold" font-family="Liberation Sans,sans-serif" textLength="7.0" lengthAdjust="spacingAndGlyphs">Nome</text><text x="1377.5" y="853.2" font-size="3.8" fill="#00ffff" stroke="#00ffff" stroke-width="0.3" font-weight="bold" font-family="Liberation Sans,sans-serif" textLength="10.5" lengthAdjust="spacingAndGlyphs">Código</text><text x="1391.2" y="853.2" font-size="3.8" fill="#00ffff" stroke="#00ffff" stroke-width="0.3" font-weight="bold" font-family="Liberation Sans,sans-serif" textLength="15.8" lengthAdjust="spacingAndGlyphs">Descrição</text><text x="1410.5" y="853.2" font-size="3.8" fill="#00ffff" stroke="#00ffff" stroke-width="0.3" font-weight="bold" font-family="Liberation Sans,sans-serif" textLength="38.5" lengthAdjust="spacingAndGlyphs">Quantidade/Comprimento</text><text x="1304" y="857.7" font-size="3.8" fill="#00ffff" stroke="#00ffff" stroke-width="0.3" font-weight="bold" font-family="Liberation Sans,sans-serif" textLength="45.0" lengthAdjust="spacingAndGlyphs">Nós de aterramento (coletores)</text><text x="1352" y="857.7" font-size="3.8" fill="#00ffff" stroke="#00ffff" stroke-width="0.3" font-weight="bold" font-family="Liberation Sans,sans-serif" textLength="12.2" lengthAdjust="spacingAndGlyphs">Coletor</text><text x="1410.5" y="857.7" font-size="3.8" fill="#00ffff" stroke="#00ffff" stroke-width="0.3" font-weight="bold" font-family="Liberation Sans,sans-serif" textLength="1.8" lengthAdjust="spacingAndGlyphs">1</text><text x="1304" y="862.2" font-size="3.8" fill="#00ffff" stroke="#00ffff" stroke-width="0.3" font-weight="bold" font-family="Liberation Sans,sans-serif" textLength="45.0" lengthAdjust="spacingAndGlyphs">Nós de aterramento (coletores)</text><text x="1352" y="862.2" font-size="3.8" fill="#00ffff" stroke="#00ffff" stroke-width="0.3" font-weight="bold" font-family="Liberation Sans,sans-serif" textLength="23.0" lengthAdjust="spacingAndGlyphs">Coletor principal</text><text x="1410.5" y="862.2" font-size="3.8" fill="#00ffff" stroke="#00ffff" stroke-width="0.3" font-weight="bold" font-family="Liberation Sans,sans-serif" textLength="1.8" lengthAdjust="spacingAndGlyphs">1</text><text x="1304" y="866.7" font-size="3.8" fill="#00ffff" stroke="#00ffff" stroke-width="0.3" font-weight="bold" font-family="Liberation Sans,sans-serif" textLength="42.0" lengthAdjust="spacingAndGlyphs">Eletrodos de aterramento</text><text x="1352" y="866.7" font-size="3.8" fill="#00ffff" stroke="#00ffff" stroke-width="0.3" font-weight="bold" font-family="Liberation Sans,sans-serif" textLength="15.8" lengthAdjust="spacingAndGlyphs">Dispersor</text><text x="1410.5" y="866.7" font-size="3.8" fill="#00ffff" stroke="#00ffff" stroke-width="0.3" font-weight="bold" font-family="Liberation Sans,sans-serif" textLength="1.8" lengthAdjust="spacingAndGlyphs">2</text><text x="1304" y="871.2" font-size="3.8" fill="#00ffff" stroke="#00ffff" stroke-width="0.3" font-weight="bold" font-family="Liberation Sans,sans-serif" textLength="42.0" lengthAdjust="spacingAndGlyphs">Eletrodos de aterramento</text><text x="1352" y="871.2" font-size="3.8" fill="#00ffff" stroke="#00ffff" stroke-width="0.3" font-weight="bold" font-family="Liberation Sans,sans-serif" textLength="22.8" lengthAdjust="spacingAndGlyphs">Terra sistema</text><text x="1410.5" y="871.2" font-size="3.8" fill="#00ffff" stroke="#00ffff" stroke-width="0.3" font-weight="bold" font-family="Liberation Sans,sans-serif" textLength="7.0" lengthAdjust="spacingAndGlyphs">18 m</text><text x="1304" y="875.7" font-size="3.8" fill="#00ffff" stroke="#00ffff" stroke-width="0.3" font-weight="bold" font-family="Liberation Sans,sans-serif" textLength="42.0" lengthAdjust="spacingAndGlyphs">Eletrodos de aterramento</text><text x="1352" y="875.7" font-size="3.8" fill="#00ffff" stroke="#00ffff" stroke-width="0.3" font-weight="bold" font-family="Liberation Sans,sans-serif" textLength="22.8" lengthAdjust="spacingAndGlyphs">Cabo nu Malha</text><text x="1410.5" y="875.7" font-size="3.8" fill="#00ffff" stroke="#00ffff" stroke-width="0.3" font-weight="bold" font-family="Liberation Sans,sans-serif" textLength="12.2" lengthAdjust="spacingAndGlyphs">121,5 m</text><text x="1304" y="880.2" font-size="3.8" fill="#00ffff" stroke="#00ffff" stroke-width="0.3" font-weight="bold" font-family="Liberation Sans,sans-serif" textLength="8.8" lengthAdjust="spacingAndGlyphs">Cabos</text><text x="1352" y="880.2" font-size="3.8" fill="#00ffff" stroke="#00ffff" stroke-width="0.3" font-weight="bold" font-family="Liberation Sans,sans-serif" textLength="7.0" lengthAdjust="spacingAndGlyphs">Cabo</text><text x="1391.2" y="880.2" font-size="3.8" fill="#00ffff" stroke="#00ffff" stroke-width="0.3" font-weight="bold" font-family="Liberation Sans,sans-serif" textLength="10.5" lengthAdjust="spacingAndGlyphs">16 mm²</text><text x="1410.5" y="880.2" font-size="3.8" fill="#00ffff" stroke="#00ffff" stroke-width="0.3" font-weight="bold" font-family="Liberation Sans,sans-serif" textLength="10.5" lengthAdjust="spacingAndGlyphs">10,3 m</text><text x="1304" y="884.7" font-size="3.8" fill="#00ffff" stroke="#00ffff" stroke-width="0.3" font-weight="bold" font-family="Liberation Sans,sans-serif" textLength="8.8" lengthAdjust="spacingAndGlyphs">Cabos</text><text x="1352" y="884.7" font-size="3.8" fill="#00ffff" stroke="#00ffff" stroke-width="0.3" font-weight="bold" font-family="Liberation Sans,sans-serif" textLength="7.0" lengthAdjust="spacingAndGlyphs">Cabo</text><text x="1391.2" y="884.7" font-size="3.8" fill="#00ffff" stroke="#00ffff" stroke-width="0.3" font-weight="bold" font-family="Liberation Sans,sans-serif" textLength="10.5" lengthAdjust="spacingAndGlyphs">16 mm²</text><text x="1410.5" y="884.7" font-size="3.8" fill="#00ffff" stroke="#00ffff" stroke-width="0.3" font-weight="bold" font-family="Liberation Sans,sans-serif" textLength="8.8" lengthAdjust="spacingAndGlyphs">0,4 m</text><text x="1304" y="889.2" font-size="3.8" fill="#00ffff" stroke="#00ffff" stroke-width="0.3" font-weight="bold" font-family="Liberation Sans,sans-serif" textLength="8.8" lengthAdjust="spacingAndGlyphs">Cabos</text><text x="1352" y="889.2" font-size="3.8" fill="#00ffff" stroke="#00ffff" stroke-width="0.3" font-weight="bold" font-family="Liberation Sans,sans-serif" textLength="7.0" lengthAdjust="spacingAndGlyphs">Cabo</text><text x="1391.2" y="889.2" font-size="3.8" fill="#00ffff" stroke="#00ffff" stroke-width="0.3" font-weight="bold" font-family="Liberation Sans,sans-serif" textLength="10.5" lengthAdjust="spacingAndGlyphs">16 mm²</text><text x="1410.5" y="889.2" font-size="3.8" fill="#00ffff" stroke="#00ffff" stroke-width="0.3" font-weight="bold" font-family="Liberation Sans,sans-serif" textLength="8.8" lengthAdjust="spacingAndGlyphs">0,3 m</text><text x="1304" y="893.7" font-size="3.8" fill="#00ffff" stroke="#00ffff" stroke-width="0.3" font-weight="bold" font-family="Liberation Sans,sans-serif" textLength="8.8" lengthAdjust="spacingAndGlyphs">Cabos</text><text x="1352" y="893.7" font-size="3.8" fill="#00ffff" stroke="#00ffff" stroke-width="0.3" font-weight="bold" font-family="Liberation Sans,sans-serif" textLength="7.0" lengthAdjust="spacingAndGlyphs">Cabo</text><text x="1391.2" y="893.7" font-size="3.8" fill="#00ffff" stroke="#00ffff" stroke-width="0.3" font-weight="bold" font-family="Liberation Sans,sans-serif" textLength="10.5" lengthAdjust="spacingAndGlyphs">16 mm²</text><text x="1410.5" y="893.7" font-size="3.8" fill="#00ffff" stroke="#00ffff" stroke-width="0.3" font-weight="bold" font-family="Liberation Sans,sans-serif" textLength="5.2" lengthAdjust="spacingAndGlyphs">1 m</text><text x="1304" y="898.2" font-size="3.8" fill="#00ffff" stroke="#00ffff" stroke-width="0.3" font-weight="bold" font-family="Liberation Sans,sans-serif" textLength="8.8" lengthAdjust="spacingAndGlyphs">Cabos</text><text x="1352" y="898.2" font-size="3.8" fill="#00ffff" stroke="#00ffff" stroke-width="0.3" font-weight="bold" font-family="Liberation Sans,sans-serif" textLength="7.0" lengthAdjust="spacingAndGlyphs">Cabo</text><text x="1391.2" y="898.2" font-size="3.8" fill="#00ffff" stroke="#00ffff" stroke-width="0.3" font-weight="bold" font-family="Liberation Sans,sans-serif" textLength="10.5" lengthAdjust="spacingAndGlyphs">16 mm²</text><text x="1410.5" y="898.2" font-size="3.8" fill="#00ffff" stroke="#00ffff" stroke-width="0.3" font-weight="bold" font-family="Liberation Sans,sans-serif" textLength="8.8" lengthAdjust="spacingAndGlyphs">0,5 m</text><text x="1304" y="902.7" font-size="3.8" fill="#00ffff" stroke="#00ffff" stroke-width="0.3" font-weight="bold" font-family="Liberation Sans,sans-serif" textLength="8.8" lengthAdjust="spacingAndGlyphs">Cabos</text><text x="1352" y="902.7" font-size="3.8" fill="#00ffff" stroke="#00ffff" stroke-width="0.3" font-weight="bold" font-family="Liberation Sans,sans-serif" textLength="7.0" lengthAdjust="spacingAndGlyphs">Cabo</text><text x="1391.2" y="902.7" font-size="3.8" fill="#00ffff" stroke="#00ffff" stroke-width="0.3" font-weight="bold" font-family="Liberation Sans,sans-serif" textLength="10.5" lengthAdjust="spacingAndGlyphs">16 mm²</text><text x="1410.5" y="902.7" font-size="3.8" fill="#00ffff" stroke="#00ffff" stroke-width="0.3" font-weight="bold" font-family="Liberation Sans,sans-serif" textLength="10.5" lengthAdjust="spacingAndGlyphs">25,5 m</text><text x="1304" y="907.2" font-size="3.8" fill="#00ffff" stroke="#00ffff" stroke-width="0.3" font-weight="bold" font-family="Liberation Sans,sans-serif" textLength="8.8" lengthAdjust="spacingAndGlyphs">Cabos</text><text x="1352" y="907.2" font-size="3.8" fill="#00ffff" stroke="#00ffff" stroke-width="0.3" font-weight="bold" font-family="Liberation Sans,sans-serif" textLength="19.2" lengthAdjust="spacingAndGlyphs">Cabo Malhas</text><text x="1391.2" y="907.2" font-size="3.8" fill="#00ffff" stroke="#00ffff" stroke-width="0.3" font-weight="bold" font-family="Liberation Sans,sans-serif" textLength="10.5" lengthAdjust="spacingAndGlyphs">70 mm²</text><text x="1410.5" y="907.2" font-size="3.8" fill="#00ffff" stroke="#00ffff" stroke-width="0.3" font-weight="bold" font-family="Liberation Sans,sans-serif" textLength="10.5" lengthAdjust="spacingAndGlyphs">1,31 m</text><text x="1304" y="911.7" font-size="3.8" fill="#00ffff" stroke="#00ffff" stroke-width="0.3" font-weight="bold" font-family="Liberation Sans,sans-serif" textLength="8.8" lengthAdjust="spacingAndGlyphs">Cabos</text><text x="1352" y="911.7" font-size="3.8" fill="#00ffff" stroke="#00ffff" stroke-width="0.3" font-weight="bold" font-family="Liberation Sans,sans-serif" textLength="12.2" lengthAdjust="spacingAndGlyphs">Cabo PE</text><text x="1391.2" y="911.7" font-size="3.8" fill="#00ffff" stroke="#00ffff" stroke-width="0.3" font-weight="bold" font-family="Liberation Sans,sans-serif" textLength="10.5" lengthAdjust="spacingAndGlyphs">70 mm²</text><text x="1410.5" y="911.7" font-size="3.8" fill="#00ffff" stroke="#00ffff" stroke-width="0.3" font-weight="bold" font-family="Liberation Sans,sans-serif" textLength="10.5" lengthAdjust="spacingAndGlyphs">23,2 m</text><text x="1085.9" y="802.6" font-size="3.2" fill="#f2f200" stroke="#f2f200" stroke-width="0.3" font-weight="bold" font-family="Liberation Sans,sans-serif" textLength="9.8" lengthAdjust="spacingAndGlyphs">Rede de</text><text x="1267" y="808.8" font-size="3.2" fill="#f2f200" stroke="#f2f200" stroke-width="0.3" font-weight="bold" font-family="Liberation Sans,sans-serif" textLength="10.3" lengthAdjust="spacingAndGlyphs">Dispersor</text><text x="1195.3" y="901.7" font-size="3.2" fill="#f2f200" stroke="#f2f200" stroke-width="0.3" font-weight="bold" font-family="Liberation Sans,sans-serif" textLength="7.7" lengthAdjust="spacingAndGlyphs">Coletor</text><text x="1806.5" y="800.5" font-size="3.2" fill="#f2f200" stroke="#f2f200" stroke-width="0.3" font-weight="bold" font-family="Liberation Sans,sans-serif" textLength="8.5" lengthAdjust="spacingAndGlyphs">Dispers</text><rect x="1098.5" y="799.5" width="5.0" height="5.0" fill="none" stroke="#8a8a8a" stroke-width="1"/><path d="M1101.0 804.5 L1101.0 811.0" fill="none" stroke="#8a8a8a" stroke-width="1"/><rect x="1279.5" y="804.5" width="5.0" height="5.5" fill="none" stroke="#8a8a8a" stroke-width="1"/><path d="M1282.0 810.0 L1282.0 816.0" fill="none" stroke="#8a8a8a" stroke-width="1"/><rect x="1205.0" y="898.3" width="9.0" height="3.3" fill="none" stroke="#8a8a8a" stroke-width="1"/><rect x="1817.0" y="797.5" width="5.5" height="5.0" fill="none" stroke="#8a8a8a" stroke-width="1"/><path d="M1820.0 802.5 L1820.0 809.0" fill="none" stroke="#8a8a8a" stroke-width="1"/></svg>
<div style="left:0px;top:1007px;width:766px;height:23px;background:#f0f0f0;"></div>
<div style="left:766px;top:1007px;width:1154px;height:23px;background:linear-gradient(to bottom,#bdbdbd 0,#dcdcdc 6px,#ececec 14px,#f0f0f0 22px);"></div>
<div style="left:1912px;top:1007px;width:8px;height:23px;background:#f0f0f0;"></div>
<span class="t" style="left:4px;top:1011.88px;font-size:15.5px;letter-spacing:-0.344px;color:#000;">+QM.1-Int. Cliente</span>
<div style="left:884px;top:1010px;width:1px;height:20px;background:#c9c9c9;"></div>
<span class="t" style="left:890px;top:1011.88px;font-size:15.5px;color:#000;">3</span>
<div style="left:1768px;top:1010px;width:1px;height:20px;background:#c9c9c9;"></div>
<span class="t" style="left:1773.4px;top:1011.88px;font-size:15.5px;letter-spacing:-0.302px;color:#000;">N = 150</span>
<div style="left:1912px;top:405px;width:6px;height:602px;background:linear-gradient(to right,rgba(0,0,0,0.32),rgba(0,0,0,0.12));"></div>
</body></html>
